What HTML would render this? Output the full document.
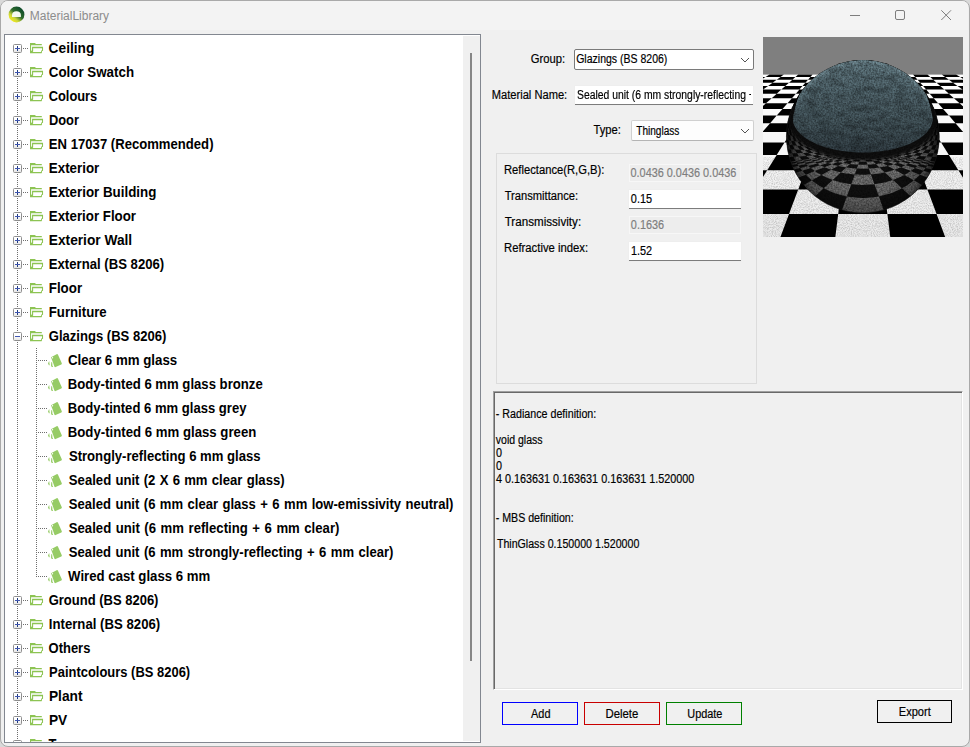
<!DOCTYPE html>
<html><head><meta charset="utf-8"><title>MaterialLibrary</title>
<style>
html,body{margin:0;padding:0}
body{width:970px;height:747px;overflow:hidden;position:relative;background:#d9d9d9;font-family:"Liberation Sans",sans-serif}
#win{position:absolute;left:0;top:0;width:968px;height:745px;border:1px solid #a9a9a9;border-radius:8px;background:#f0f0f0;overflow:hidden}
#tbar{position:absolute;left:0;top:0;width:968px;height:30px;background:#f3f3f3}
#pg{position:absolute;left:-1px;top:-1px;width:970px;height:747px}
.t{position:absolute;white-space:nowrap;font-size:12px;line-height:14px;transform-origin:0 11px;color:#000;-webkit-text-stroke:0.18px currentColor}
.b{position:absolute;white-space:nowrap;font-size:13px;line-height:15px;font-weight:bold;color:#000;transform-origin:0 12px}
.ic{position:absolute;display:block}
#tree{position:absolute;left:4px;top:34px;width:475px;height:707px;border:1px solid #828790;background:#fff;overflow:hidden}
#tin{position:absolute;left:-5px;top:-35px;width:470px;height:800px}
#sb{position:absolute;left:458px;top:1px;width:17px;height:705px;background:#f0f0f0}
#thumb{position:absolute;left:7px;top:17px;width:2px;height:608px;background:#868686}
.vd{position:absolute;width:1px;background:repeating-linear-gradient(to bottom,#6e6e6e 0,#6e6e6e 1px,transparent 1px,transparent 2px)}
.hd{position:absolute;height:1px;background:repeating-linear-gradient(to right,#6e6e6e 0,#6e6e6e 1px,transparent 1px,transparent 2px)}
.eb{position:absolute;left:13px;width:7px;height:7px;border:1px solid #8e8e8e;border-radius:1.5px;background:linear-gradient(#fff 40%,#e6e6e6)}
.eb .h{position:absolute;left:1px;top:3px;width:5px;height:1px;background:#4056b2;z-index:2}
.eb .v{position:absolute;left:3px;top:1px;width:1px;height:5px;background:#1f3a7c}
.combo{position:absolute;border:1px solid #7a7a7a;border-radius:2px;background:#fff}
.tb{position:absolute;background:#fff;border-bottom:1px solid #7c7c7c;box-shadow:0 0 0 0.5px #ececec;box-sizing:border-box}
.dis{position:absolute;width:110px;height:16px;border:1px solid #f7f7f7;background:#ededed}
.clip{position:absolute;overflow:hidden}
#gb{position:absolute;left:496px;top:153px;width:259px;height:229px;border:1px solid #dcdcdc}
#ta{position:absolute;left:493px;top:391px;width:468px;height:297px;border-style:solid;border-width:1px;border-color:#a0a0a0 #fff #fff #a0a0a0;background:#f0f0f0;box-shadow:inset 1px 1px 0 0 #696969,inset -1px -1px 0 0 #e3e3e3}
.btn{position:absolute;border:1px solid #000;background:#f0f0f0}
#img{position:absolute;left:763px;top:37px;display:block}
</style></head>
<body>
<div id="win"><div id="pg">
<div id="tbar"></div>
<svg class="ic" style="left:8.3px;top:6.4px" width="17" height="17" viewBox="0 0 17 17"><defs><linearGradient id="ig" x1="0.85" y1="0.15" x2="0.2" y2="0.9"><stop offset="0" stop-color="#0d4a2a"/><stop offset="0.45" stop-color="#2f6b2c"/><stop offset="0.75" stop-color="#c9d63a"/><stop offset="1" stop-color="#f3e81d"/></linearGradient></defs><circle cx="8.5" cy="8.5" r="7.9" fill="url(#ig)"/><path d="M4.0 11.1 L12.9 11.1 L12.9 9.0 Q12.6 5.4 8.4 5.3 Q4.3 5.4 4.0 9.0 Z" fill="#f6f9f0"/></svg>
<svg class="ic" style="left:845px;top:5px" width="115" height="20" viewBox="0 0 115 20"><g fill="none" stroke="#7d7d7d" stroke-width="1"><path d="M5 10.5H15"/><rect x="50.5" y="5.5" width="9" height="9" rx="1.5"/><path d="M96.3 5.3L106 15M106 5.3L96.3 15"/></g></svg>
<div id="tree">
<div id="tin">
<div class="vd" style="left:17px;top:48px;height:700px"></div>
<div class="vd" style="left:36px;top:348px;height:229px"></div>
<div class="hd" style="left:23px;top:48px;width:5px;background-position:0 0"></div>
<div class="eb" style="top:44px"><i class="h"></i><i class="v"></i></div>
<svg class="ic" style="left:30px;top:43px" width="15" height="12" viewBox="0 0 15 12"><path fill="#8dc453" d="M0 0h5l0.9 1.05h5.9v1.3H1.1v5.6l0.95-0.7V3.85h11v3.9l-1.1 0.6v1.2l-0.35 0.75H0z M3.15 5.2v3.2l-0.5 0.5h8.25l0.5-1.3 0.6-0.5V5.2z" fill-rule="evenodd"/></svg>
<span class="b" style="left:48px;top:41px;color:#000;transform:translateX(0.62px) scale(1.0547,1.07);">Ceiling</span>
<div class="hd" style="left:23px;top:72px;width:5px;background-position:0 0"></div>
<div class="eb" style="top:68px"><i class="h"></i><i class="v"></i></div>
<svg class="ic" style="left:30px;top:67px" width="15" height="12" viewBox="0 0 15 12"><path fill="#8dc453" d="M0 0h5l0.9 1.05h5.9v1.3H1.1v5.6l0.95-0.7V3.85h11v3.9l-1.1 0.6v1.2l-0.35 0.75H0z M3.15 5.2v3.2l-0.5 0.5h8.25l0.5-1.3 0.6-0.5V5.2z" fill-rule="evenodd"/></svg>
<span class="b" style="left:48px;top:65px;color:#000;transform:translateX(0.74px) scale(1.0275,1.07);">Color Swatch</span>
<div class="hd" style="left:23px;top:96px;width:5px;background-position:0 0"></div>
<div class="eb" style="top:92px"><i class="h"></i><i class="v"></i></div>
<svg class="ic" style="left:30px;top:91px" width="15" height="12" viewBox="0 0 15 12"><path fill="#8dc453" d="M0 0h5l0.9 1.05h5.9v1.3H1.1v5.6l0.95-0.7V3.85h11v3.9l-1.1 0.6v1.2l-0.35 0.75H0z M3.15 5.2v3.2l-0.5 0.5h8.25l0.5-1.3 0.6-0.5V5.2z" fill-rule="evenodd"/></svg>
<span class="b" style="left:48px;top:89px;color:#000;transform:translateX(0.69px) scale(0.9886,1.07);">Colours</span>
<div class="hd" style="left:23px;top:120px;width:5px;background-position:0 0"></div>
<div class="eb" style="top:116px"><i class="h"></i><i class="v"></i></div>
<svg class="ic" style="left:30px;top:115px" width="15" height="12" viewBox="0 0 15 12"><path fill="#8dc453" d="M0 0h5l0.9 1.05h5.9v1.3H1.1v5.6l0.95-0.7V3.85h11v3.9l-1.1 0.6v1.2l-0.35 0.75H0z M3.15 5.2v3.2l-0.5 0.5h8.25l0.5-1.3 0.6-0.5V5.2z" fill-rule="evenodd"/></svg>
<span class="b" style="left:48px;top:113px;color:#000;transform:translateX(0.92px) scale(0.9878,1.07);">Door</span>
<div class="hd" style="left:23px;top:144px;width:5px;background-position:0 0"></div>
<div class="eb" style="top:140px"><i class="h"></i><i class="v"></i></div>
<svg class="ic" style="left:30px;top:139px" width="15" height="12" viewBox="0 0 15 12"><path fill="#8dc453" d="M0 0h5l0.9 1.05h5.9v1.3H1.1v5.6l0.95-0.7V3.85h11v3.9l-1.1 0.6v1.2l-0.35 0.75H0z M3.15 5.2v3.2l-0.5 0.5h8.25l0.5-1.3 0.6-0.5V5.2z" fill-rule="evenodd"/></svg>
<span class="b" style="left:48px;top:137px;color:#000;transform:translateX(0.87px) scale(1.0082,1.07);">EN 17037 (Recommended)</span>
<div class="hd" style="left:23px;top:168px;width:5px;background-position:0 0"></div>
<div class="eb" style="top:164px"><i class="h"></i><i class="v"></i></div>
<svg class="ic" style="left:30px;top:163px" width="15" height="12" viewBox="0 0 15 12"><path fill="#8dc453" d="M0 0h5l0.9 1.05h5.9v1.3H1.1v5.6l0.95-0.7V3.85h11v3.9l-1.1 0.6v1.2l-0.35 0.75H0z M3.15 5.2v3.2l-0.5 0.5h8.25l0.5-1.3 0.6-0.5V5.2z" fill-rule="evenodd"/></svg>
<span class="b" style="left:48px;top:161px;color:#000;transform:translateX(0.79px) scale(1.0279,1.07);">Exterior</span>
<div class="hd" style="left:23px;top:192px;width:5px;background-position:0 0"></div>
<div class="eb" style="top:188px"><i class="h"></i><i class="v"></i></div>
<svg class="ic" style="left:30px;top:187px" width="15" height="12" viewBox="0 0 15 12"><path fill="#8dc453" d="M0 0h5l0.9 1.05h5.9v1.3H1.1v5.6l0.95-0.7V3.85h11v3.9l-1.1 0.6v1.2l-0.35 0.75H0z M3.15 5.2v3.2l-0.5 0.5h8.25l0.5-1.3 0.6-0.5V5.2z" fill-rule="evenodd"/></svg>
<span class="b" style="left:48px;top:185px;color:#000;transform:translateX(0.75px) scale(1.0277,1.07);">Exterior Building</span>
<div class="hd" style="left:23px;top:216px;width:5px;background-position:0 0"></div>
<div class="eb" style="top:212px"><i class="h"></i><i class="v"></i></div>
<svg class="ic" style="left:30px;top:211px" width="15" height="12" viewBox="0 0 15 12"><path fill="#8dc453" d="M0 0h5l0.9 1.05h5.9v1.3H1.1v5.6l0.95-0.7V3.85h11v3.9l-1.1 0.6v1.2l-0.35 0.75H0z M3.15 5.2v3.2l-0.5 0.5h8.25l0.5-1.3 0.6-0.5V5.2z" fill-rule="evenodd"/></svg>
<span class="b" style="left:48px;top:209px;color:#000;transform:translateX(0.79px) scale(1.0231,1.07);">Exterior Floor</span>
<div class="hd" style="left:23px;top:240px;width:5px;background-position:0 0"></div>
<div class="eb" style="top:236px"><i class="h"></i><i class="v"></i></div>
<svg class="ic" style="left:30px;top:235px" width="15" height="12" viewBox="0 0 15 12"><path fill="#8dc453" d="M0 0h5l0.9 1.05h5.9v1.3H1.1v5.6l0.95-0.7V3.85h11v3.9l-1.1 0.6v1.2l-0.35 0.75H0z M3.15 5.2v3.2l-0.5 0.5h8.25l0.5-1.3 0.6-0.5V5.2z" fill-rule="evenodd"/></svg>
<span class="b" style="left:48px;top:233px;color:#000;transform:translateX(0.78px) scale(1.0557,1.07);">Exterior Wall</span>
<div class="hd" style="left:23px;top:264px;width:5px;background-position:0 0"></div>
<div class="eb" style="top:260px"><i class="h"></i><i class="v"></i></div>
<svg class="ic" style="left:30px;top:259px" width="15" height="12" viewBox="0 0 15 12"><path fill="#8dc453" d="M0 0h5l0.9 1.05h5.9v1.3H1.1v5.6l0.95-0.7V3.85h11v3.9l-1.1 0.6v1.2l-0.35 0.75H0z M3.15 5.2v3.2l-0.5 0.5h8.25l0.5-1.3 0.6-0.5V5.2z" fill-rule="evenodd"/></svg>
<span class="b" style="left:48px;top:257px;color:#000;transform:translateX(0.79px) scale(1.0110,1.07);">External (BS 8206)</span>
<div class="hd" style="left:23px;top:288px;width:5px;background-position:0 0"></div>
<div class="eb" style="top:284px"><i class="h"></i><i class="v"></i></div>
<svg class="ic" style="left:30px;top:283px" width="15" height="12" viewBox="0 0 15 12"><path fill="#8dc453" d="M0 0h5l0.9 1.05h5.9v1.3H1.1v5.6l0.95-0.7V3.85h11v3.9l-1.1 0.6v1.2l-0.35 0.75H0z M3.15 5.2v3.2l-0.5 0.5h8.25l0.5-1.3 0.6-0.5V5.2z" fill-rule="evenodd"/></svg>
<span class="b" style="left:48px;top:281px;color:#000;transform:translateX(0.79px) scale(1.0241,1.07);">Floor</span>
<div class="hd" style="left:23px;top:312px;width:5px;background-position:0 0"></div>
<div class="eb" style="top:308px"><i class="h"></i><i class="v"></i></div>
<svg class="ic" style="left:30px;top:307px" width="15" height="12" viewBox="0 0 15 12"><path fill="#8dc453" d="M0 0h5l0.9 1.05h5.9v1.3H1.1v5.6l0.95-0.7V3.85h11v3.9l-1.1 0.6v1.2l-0.35 0.75H0z M3.15 5.2v3.2l-0.5 0.5h8.25l0.5-1.3 0.6-0.5V5.2z" fill-rule="evenodd"/></svg>
<span class="b" style="left:48px;top:305px;color:#000;transform:translateX(0.77px) scale(1.0157,1.07);">Furniture</span>
<div class="hd" style="left:23px;top:336px;width:5px;background-position:0 0"></div>
<div class="eb" style="top:332px"><i class="h"></i></div>
<svg class="ic" style="left:30px;top:331px" width="15" height="12" viewBox="0 0 15 12"><path fill="#8dc453" d="M0 0h5l0.9 1.05h5.9v1.3H1.1v5.6l0.95-0.7V3.85h11v3.9l-1.1 0.6v1.2l-0.35 0.75H0z M3.15 5.2v3.2l-0.5 0.5h8.25l0.5-1.3 0.6-0.5V5.2z" fill-rule="evenodd"/></svg>
<span class="b" style="left:48px;top:329px;color:#000;transform:translateX(0.73px) scale(1.0051,1.07);">Glazings (BS 8206)</span>
<div class="hd" style="left:38px;top:360px;width:9px"></div>
<svg class="ic" style="left:47px;top:353px" width="16" height="15" viewBox="0 0 16 15"><path d="M4.0 4.2 L9.6 1.2 Q10.6 0.8 11.0 1.8 L14.8 10.2 Q15.1 11.0 14.3 11.5 L8.6 14.1 Q7.7 14.4 7.4 13.6 L5.6 8.6 Z" fill="#96cb65"/><circle cx="5.5" cy="4.7" r="0.7" fill="#fff"/><path d="M2.2 7.9 L2.7 12.3 L1.9 12.3 L1.0 10.6 Z M4.3 9.0 L5.2 9.6 L5.4 12.4 L6.1 13.9 L4.7 14.0 L4.0 12.5 Z" fill="#96cb65"/></svg>
<span class="b" style="left:67px;top:353px;color:#000;transform:translateX(0.91px) scale(1.0221,1.07);">Clear 6 mm glass</span>
<div class="hd" style="left:38px;top:384px;width:9px"></div>
<svg class="ic" style="left:47px;top:377px" width="16" height="15" viewBox="0 0 16 15"><path d="M4.0 4.2 L9.6 1.2 Q10.6 0.8 11.0 1.8 L14.8 10.2 Q15.1 11.0 14.3 11.5 L8.6 14.1 Q7.7 14.4 7.4 13.6 L5.6 8.6 Z" fill="#96cb65"/><circle cx="5.5" cy="4.7" r="0.7" fill="#fff"/><path d="M2.2 7.9 L2.7 12.3 L1.9 12.3 L1.0 10.6 Z M4.3 9.0 L5.2 9.6 L5.4 12.4 L6.1 13.9 L4.7 14.0 L4.0 12.5 Z" fill="#96cb65"/></svg>
<span class="b" style="left:67px;top:377px;color:#000;transform:translateX(0.72px) scale(1.0110,1.07);">Body-tinted 6 mm glass bronze</span>
<div class="hd" style="left:38px;top:408px;width:9px"></div>
<svg class="ic" style="left:47px;top:401px" width="16" height="15" viewBox="0 0 16 15"><path d="M4.0 4.2 L9.6 1.2 Q10.6 0.8 11.0 1.8 L14.8 10.2 Q15.1 11.0 14.3 11.5 L8.6 14.1 Q7.7 14.4 7.4 13.6 L5.6 8.6 Z" fill="#96cb65"/><circle cx="5.5" cy="4.7" r="0.7" fill="#fff"/><path d="M2.2 7.9 L2.7 12.3 L1.9 12.3 L1.0 10.6 Z M4.3 9.0 L5.2 9.6 L5.4 12.4 L6.1 13.9 L4.7 14.0 L4.0 12.5 Z" fill="#96cb65"/></svg>
<span class="b" style="left:67px;top:401px;color:#000;transform:translateX(0.77px) scale(1.0055,1.07);">Body-tinted 6 mm glass grey</span>
<div class="hd" style="left:38px;top:432px;width:9px"></div>
<svg class="ic" style="left:47px;top:425px" width="16" height="15" viewBox="0 0 16 15"><path d="M4.0 4.2 L9.6 1.2 Q10.6 0.8 11.0 1.8 L14.8 10.2 Q15.1 11.0 14.3 11.5 L8.6 14.1 Q7.7 14.4 7.4 13.6 L5.6 8.6 Z" fill="#96cb65"/><circle cx="5.5" cy="4.7" r="0.7" fill="#fff"/><path d="M2.2 7.9 L2.7 12.3 L1.9 12.3 L1.0 10.6 Z M4.3 9.0 L5.2 9.6 L5.4 12.4 L6.1 13.9 L4.7 14.0 L4.0 12.5 Z" fill="#96cb65"/></svg>
<span class="b" style="left:67px;top:425px;color:#000;transform:translateX(0.74px) scale(1.0156,1.07);">Body-tinted 6 mm glass green</span>
<div class="hd" style="left:38px;top:456px;width:9px"></div>
<svg class="ic" style="left:47px;top:449px" width="16" height="15" viewBox="0 0 16 15"><path d="M4.0 4.2 L9.6 1.2 Q10.6 0.8 11.0 1.8 L14.8 10.2 Q15.1 11.0 14.3 11.5 L8.6 14.1 Q7.7 14.4 7.4 13.6 L5.6 8.6 Z" fill="#96cb65"/><circle cx="5.5" cy="4.7" r="0.7" fill="#fff"/><path d="M2.2 7.9 L2.7 12.3 L1.9 12.3 L1.0 10.6 Z M4.3 9.0 L5.2 9.6 L5.4 12.4 L6.1 13.9 L4.7 14.0 L4.0 12.5 Z" fill="#96cb65"/></svg>
<span class="b" style="left:68px;top:449px;color:#000;transform:translateX(0.88px) scale(1.0093,1.07);">Strongly-reflecting 6 mm glass</span>
<div class="hd" style="left:38px;top:480px;width:9px"></div>
<svg class="ic" style="left:47px;top:473px" width="16" height="15" viewBox="0 0 16 15"><path d="M4.0 4.2 L9.6 1.2 Q10.6 0.8 11.0 1.8 L14.8 10.2 Q15.1 11.0 14.3 11.5 L8.6 14.1 Q7.7 14.4 7.4 13.6 L5.6 8.6 Z" fill="#96cb65"/><circle cx="5.5" cy="4.7" r="0.7" fill="#fff"/><path d="M2.2 7.9 L2.7 12.3 L1.9 12.3 L1.0 10.6 Z M4.3 9.0 L5.2 9.6 L5.4 12.4 L6.1 13.9 L4.7 14.0 L4.0 12.5 Z" fill="#96cb65"/></svg>
<span class="b" style="left:68px;top:473px;color:#000;word-spacing:0.6px;transform:translateX(0.82px) scale(1.0098,1.07);">Sealed unit (2 X 6 mm clear glass)</span>
<div class="hd" style="left:38px;top:504px;width:9px"></div>
<svg class="ic" style="left:47px;top:497px" width="16" height="15" viewBox="0 0 16 15"><path d="M4.0 4.2 L9.6 1.2 Q10.6 0.8 11.0 1.8 L14.8 10.2 Q15.1 11.0 14.3 11.5 L8.6 14.1 Q7.7 14.4 7.4 13.6 L5.6 8.6 Z" fill="#96cb65"/><circle cx="5.5" cy="4.7" r="0.7" fill="#fff"/><path d="M2.2 7.9 L2.7 12.3 L1.9 12.3 L1.0 10.6 Z M4.3 9.0 L5.2 9.6 L5.4 12.4 L6.1 13.9 L4.7 14.0 L4.0 12.5 Z" fill="#96cb65"/></svg>
<span class="b" style="left:68px;top:497px;color:#000;word-spacing:0.8px;transform:translateX(0.84px) scale(1.0051,1.07);">Sealed unit (6 mm clear glass + 6 mm low-emissivity neutral)</span>
<div class="hd" style="left:38px;top:528px;width:9px"></div>
<svg class="ic" style="left:47px;top:521px" width="16" height="15" viewBox="0 0 16 15"><path d="M4.0 4.2 L9.6 1.2 Q10.6 0.8 11.0 1.8 L14.8 10.2 Q15.1 11.0 14.3 11.5 L8.6 14.1 Q7.7 14.4 7.4 13.6 L5.6 8.6 Z" fill="#96cb65"/><circle cx="5.5" cy="4.7" r="0.7" fill="#fff"/><path d="M2.2 7.9 L2.7 12.3 L1.9 12.3 L1.0 10.6 Z M4.3 9.0 L5.2 9.6 L5.4 12.4 L6.1 13.9 L4.7 14.0 L4.0 12.5 Z" fill="#96cb65"/></svg>
<span class="b" style="left:68px;top:521px;color:#000;word-spacing:0.9px;transform:translateX(0.79px) scale(1.0110,1.07);">Sealed unit (6 mm reflecting + 6 mm clear)</span>
<div class="hd" style="left:38px;top:552px;width:9px"></div>
<svg class="ic" style="left:47px;top:545px" width="16" height="15" viewBox="0 0 16 15"><path d="M4.0 4.2 L9.6 1.2 Q10.6 0.8 11.0 1.8 L14.8 10.2 Q15.1 11.0 14.3 11.5 L8.6 14.1 Q7.7 14.4 7.4 13.6 L5.6 8.6 Z" fill="#96cb65"/><circle cx="5.5" cy="4.7" r="0.7" fill="#fff"/><path d="M2.2 7.9 L2.7 12.3 L1.9 12.3 L1.0 10.6 Z M4.3 9.0 L5.2 9.6 L5.4 12.4 L6.1 13.9 L4.7 14.0 L4.0 12.5 Z" fill="#96cb65"/></svg>
<span class="b" style="left:68px;top:545px;color:#000;word-spacing:0.8px;transform:translateX(0.85px) scale(1.0067,1.07);">Sealed unit (6 mm strongly-reflecting + 6 mm clear)</span>
<div class="hd" style="left:38px;top:576px;width:9px"></div>
<svg class="ic" style="left:47px;top:569px" width="16" height="15" viewBox="0 0 16 15"><path d="M4.0 4.2 L9.6 1.2 Q10.6 0.8 11.0 1.8 L14.8 10.2 Q15.1 11.0 14.3 11.5 L8.6 14.1 Q7.7 14.4 7.4 13.6 L5.6 8.6 Z" fill="#96cb65"/><circle cx="5.5" cy="4.7" r="0.7" fill="#fff"/><path d="M2.2 7.9 L2.7 12.3 L1.9 12.3 L1.0 10.6 Z M4.3 9.0 L5.2 9.6 L5.4 12.4 L6.1 13.9 L4.7 14.0 L4.0 12.5 Z" fill="#96cb65"/></svg>
<span class="b" style="left:68px;top:569px;color:#000;transform:translateX(0.07px) scale(1.0153,1.07);">Wired cast glass 6 mm</span>
<div class="hd" style="left:23px;top:600px;width:5px;background-position:0 0"></div>
<div class="eb" style="top:596px"><i class="h"></i><i class="v"></i></div>
<svg class="ic" style="left:30px;top:595px" width="15" height="12" viewBox="0 0 15 12"><path fill="#8dc453" d="M0 0h5l0.9 1.05h5.9v1.3H1.1v5.6l0.95-0.7V3.85h11v3.9l-1.1 0.6v1.2l-0.35 0.75H0z M3.15 5.2v3.2l-0.5 0.5h8.25l0.5-1.3 0.6-0.5V5.2z" fill-rule="evenodd"/></svg>
<span class="b" style="left:48px;top:593px;color:#000;transform:translateX(0.65px) scale(0.9999,1.07);">Ground (BS 8206)</span>
<div class="hd" style="left:23px;top:624px;width:5px;background-position:0 0"></div>
<div class="eb" style="top:620px"><i class="h"></i><i class="v"></i></div>
<svg class="ic" style="left:30px;top:619px" width="15" height="12" viewBox="0 0 15 12"><path fill="#8dc453" d="M0 0h5l0.9 1.05h5.9v1.3H1.1v5.6l0.95-0.7V3.85h11v3.9l-1.1 0.6v1.2l-0.35 0.75H0z M3.15 5.2v3.2l-0.5 0.5h8.25l0.5-1.3 0.6-0.5V5.2z" fill-rule="evenodd"/></svg>
<span class="b" style="left:48px;top:617px;color:#000;transform:translateX(0.80px) scale(1.0143,1.07);">Internal (BS 8206)</span>
<div class="hd" style="left:23px;top:648px;width:5px;background-position:0 0"></div>
<div class="eb" style="top:644px"><i class="h"></i><i class="v"></i></div>
<svg class="ic" style="left:30px;top:643px" width="15" height="12" viewBox="0 0 15 12"><path fill="#8dc453" d="M0 0h5l0.9 1.05h5.9v1.3H1.1v5.6l0.95-0.7V3.85h11v3.9l-1.1 0.6v1.2l-0.35 0.75H0z M3.15 5.2v3.2l-0.5 0.5h8.25l0.5-1.3 0.6-0.5V5.2z" fill-rule="evenodd"/></svg>
<span class="b" style="left:48px;top:641px;color:#000;transform:translateX(0.60px) scale(0.9970,1.07);">Others</span>
<div class="hd" style="left:23px;top:672px;width:5px;background-position:0 0"></div>
<div class="eb" style="top:668px"><i class="h"></i><i class="v"></i></div>
<svg class="ic" style="left:30px;top:667px" width="15" height="12" viewBox="0 0 15 12"><path fill="#8dc453" d="M0 0h5l0.9 1.05h5.9v1.3H1.1v5.6l0.95-0.7V3.85h11v3.9l-1.1 0.6v1.2l-0.35 0.75H0z M3.15 5.2v3.2l-0.5 0.5h8.25l0.5-1.3 0.6-0.5V5.2z" fill-rule="evenodd"/></svg>
<span class="b" style="left:49px;top:665px;color:#000;transform:translateX(0.07px) scale(0.9964,1.07);">Paintcolours (BS 8206)</span>
<div class="hd" style="left:23px;top:696px;width:5px;background-position:0 0"></div>
<div class="eb" style="top:692px"><i class="h"></i><i class="v"></i></div>
<svg class="ic" style="left:30px;top:691px" width="15" height="12" viewBox="0 0 15 12"><path fill="#8dc453" d="M0 0h5l0.9 1.05h5.9v1.3H1.1v5.6l0.95-0.7V3.85h11v3.9l-1.1 0.6v1.2l-0.35 0.75H0z M3.15 5.2v3.2l-0.5 0.5h8.25l0.5-1.3 0.6-0.5V5.2z" fill-rule="evenodd"/></svg>
<span class="b" style="left:48px;top:689px;color:#000;transform:translateX(0.89px) scale(1.0574,1.07);">Plant</span>
<div class="hd" style="left:23px;top:720px;width:5px;background-position:0 0"></div>
<div class="eb" style="top:716px"><i class="h"></i><i class="v"></i></div>
<svg class="ic" style="left:30px;top:715px" width="15" height="12" viewBox="0 0 15 12"><path fill="#8dc453" d="M0 0h5l0.9 1.05h5.9v1.3H1.1v5.6l0.95-0.7V3.85h11v3.9l-1.1 0.6v1.2l-0.35 0.75H0z M3.15 5.2v3.2l-0.5 0.5h8.25l0.5-1.3 0.6-0.5V5.2z" fill-rule="evenodd"/></svg>
<span class="b" style="left:48px;top:713px;color:#000;transform:translateX(0.95px) scale(1.0555,1.07);">PV</span>
<div class="hd" style="left:23px;top:744px;width:5px;background-position:0 0"></div>
<div class="eb" style="top:740px"><i class="h"></i><i class="v"></i></div>
<svg class="ic" style="left:30px;top:739px" width="15" height="12" viewBox="0 0 15 12"><path fill="#8dc453" d="M0 0h5l0.9 1.05h5.9v1.3H1.1v5.6l0.95-0.7V3.85h11v3.9l-1.1 0.6v1.2l-0.35 0.75H0z M3.15 5.2v3.2l-0.5 0.5h8.25l0.5-1.3 0.6-0.5V5.2z" fill-rule="evenodd"/></svg>
<span class="b" style="left:48px;top:737px;color:#000;transform:translateX(0.60px) scale(0.9953,1.07);">T</span>
</div>
<div id="sb"><div id="thumb"></div></div>
</div>
<span class="t" style="left:530px;top:52px;color:#000;transform:translateX(0.79px) scale(0.9360,1.0);">Group:</span>
<span class="t" style="left:491px;top:88px;color:#000;transform:translateX(0.75px) scale(0.9275,1.0);">Material Name:</span>
<span class="t" style="left:593px;top:123px;color:#000;transform:translateX(0.47px) scale(0.9326,1.0);">Type:</span>
<div class="combo" style="left:574px;top:49px;width:178px;height:19px;border-color:#7a7a7a"></div>
<svg class="ic" style="left:739px;top:56px" width="12" height="8" viewBox="0 0 12 8"><path d="M2 2 L6 6 L10 2" fill="none" stroke="#4a4a4a" stroke-width="0.95"/></svg>
<span class="t" style="left:576px;top:52px;color:#000;transform:translateX(0.18px) scale(0.8763,1.0);">Glazings (BS 8206)</span>
<div class="tb" style="left:575px;top:86px;width:178px;height:19px"></div>
<div class="clip" style="left:575px;top:86px;width:176px;height:18px">
<span class="t" style="left:2px;top:2px;transform:scaleX(0.8644)">Sealed unit (6 mm strongly-reflecting + 6 mm clear)</span>
</div>
<div class="combo" style="left:631px;top:120px;width:121px;height:19px;border-color:#d0d0d0;border-bottom-color:#b4b4b4;background:#fdfdfd"></div>
<svg class="ic" style="left:739px;top:127px" width="12" height="8" viewBox="0 0 12 8"><path d="M2 2 L6 6 L10 2" fill="none" stroke="#4a4a4a" stroke-width="0.95"/></svg>
<span class="t" style="left:636px;top:124px;color:#000;transform:translateX(0.26px) scale(0.8397,1.0);">Thinglass</span>
<div id="gb"></div>
<span class="t" style="left:504px;top:163px;color:#000;transform:translateX(0.02px) scale(0.9343,1.0);">Reflectance(R,G,B):</span>
<div class="dis" style="left:629px;top:164px"></div>
<span class="t" style="left:630px;top:166px;color:#7e7e7e;transform:translateX(0.53px) scale(0.9060,1.0);">0.0436 0.0436 0.0436</span>
<span class="t" style="left:504px;top:189px;color:#000;transform:translateX(0.63px) scale(0.9320,1.0);">Transmittance:</span>
<div class="tb" style="left:629px;top:190px;width:112px;height:19px"></div>
<span class="t" style="left:630px;top:192px;color:#000;transform:translateX(0.86px) scale(0.9060,1.0);">0.15</span>
<span class="t" style="left:504px;top:215px;color:#000;transform:translateX(0.67px) scale(0.9689,1.0);">Transmissivity:</span>
<div class="dis" style="left:629px;top:216px"></div>
<span class="t" style="left:630px;top:218px;color:#7e7e7e;transform:translateX(0.87px) scale(0.9060,1.0);">0.1636</span>
<span class="t" style="left:504px;top:241px;color:#000;transform:translateX(0.03px) scale(0.9403,1.0);">Refractive index:</span>
<div class="tb" style="left:629px;top:242px;width:112px;height:19px"></div>
<span class="t" style="left:630px;top:244px;color:#000;transform:translateX(0.94px) scale(0.9060,1.0);">1.52</span>
<div id="ta"></div>
<span class="t" style="left:495px;top:407px;color:#000;transform:translateX(0.71px) scale(0.8920,1.0);">- Radiance definition:</span>
<span class="t" style="left:495px;top:433px;color:#000;transform:translateX(0.76px) scale(0.8773,1.0);">void glass</span>
<span class="t" style="left:495px;top:446px;color:#000;transform:translateX(0.89px) scale(0.9000,1.0);">0</span>
<span class="t" style="left:495px;top:459px;color:#000;transform:translateX(0.89px) scale(0.9000,1.0);">0</span>
<span class="t" style="left:495px;top:472px;color:#000;transform:translateX(0.90px) scale(0.9011,1.0);">4 0.163631 0.163631 0.163631 1.520000</span>
<span class="t" style="left:495px;top:511px;color:#000;transform:translateX(0.69px) scale(0.8864,1.0);">- MBS definition:</span>
<span class="t" style="left:496px;top:537px;color:#000;transform:translateX(0.89px) scale(0.8857,1.0);">ThinGlass 0.150000 1.520000</span>
<div class="btn" style="left:502px;top:702px;width:74px;height:21px;border-color:#0000ff"></div>
<span class="t" style="left:531px;top:707px;color:#000;transform:translateX(0.10px) scale(0.9087,1.0);">Add</span>
<div class="btn" style="left:584px;top:702px;width:74px;height:21px;border-color:#c80000"></div>
<span class="t" style="left:605px;top:707px;color:#000;transform:translateX(0.43px) scale(0.9485,1.0);">Delete</span>
<div class="btn" style="left:666px;top:702px;width:74px;height:21px;border-color:#008000"></div>
<span class="t" style="left:687px;top:707px;color:#000;transform:translateX(0.28px) scale(0.9080,1.0);">Update</span>
<div class="btn" style="left:877px;top:700px;width:73px;height:21px;border-color:#000"></div>
<span class="t" style="left:898px;top:705px;color:#000;transform:translateX(0.79px) scale(0.9205,1.0);">Export</span>
<span class="t" style="left:29px;top:9px;color:#8c8c8c;transform:translateX(0.80px) scale(0.9982,1.0);-webkit-text-stroke:0;">MaterialLibrary</span>
<svg id="img" width="200" height="200" viewBox="0 0 200 200">
<defs>
<clipPath id="cs"><circle cx="99.85" cy="99.50" r="76.4"/></clipPath>
<filter id="bl" x="-5%" y="-5%" width="110%" height="110%"><feGaussianBlur stdDeviation="0.75"/></filter>
<filter id="bl2"><feGaussianBlur stdDeviation="0.7"/></filter>
<filter id="bl3" x="-10%" y="-10%" width="120%" height="120%"><feGaussianBlur stdDeviation="1.6"/></filter>
<filter id="nz" x="0" y="0" width="100%" height="100%"><feTurbulence type="fractalNoise" baseFrequency="0.6" numOctaves="2" seed="3" result="n"/><feColorMatrix type="matrix" values="0 0 0 0 0  0 0 0 0 0  0 0 0 0 0  1.6 0 0 0 -0.45"/></filter>
<filter id="nzl" x="0" y="0" width="100%" height="100%"><feTurbulence type="fractalNoise" baseFrequency="0.09 0.16" numOctaves="2" seed="5"/><feColorMatrix type="matrix" values="0 0 0 0 0  0 0 0 0 0  0 0 0 0 0  2.4 0 0 0 -0.95"/></filter>
<filter id="nzw" x="0" y="0" width="100%" height="100%"><feTurbulence type="fractalNoise" baseFrequency="0.95" numOctaves="2" seed="8"/><feColorMatrix type="matrix" values="0 0 0 0 0  0 0 0 0 0  0 0 0 0 0  1.4 0 0 0 -0.5"/></filter>
<linearGradient id="wg" x1="0" y1="0" x2="0" y2="1"><stop offset="0" stop-color="#ffffff"/><stop offset="0.45" stop-color="#f6f6f6"/><stop offset="1" stop-color="#e9e9e9"/></linearGradient>
<radialGradient id="cap" cx="99.9" cy="62" r="95" gradientUnits="userSpaceOnUse"><stop offset="0" stop-color="#627b85"/><stop offset="0.5" stop-color="#52676f"/><stop offset="0.85" stop-color="#3f5058"/><stop offset="1" stop-color="#2f3b41"/></radialGradient>
<radialGradient id="sh" cx="99.9" cy="109.5" r="76.4" gradientUnits="userSpaceOnUse"><stop offset="0" stop-color="#000" stop-opacity="0"/><stop offset="0.6" stop-color="#000" stop-opacity="0.02"/><stop offset="0.85" stop-color="#000" stop-opacity="0.3"/><stop offset="1" stop-color="#000" stop-opacity="0.8"/></radialGradient>
<clipPath id="capc"><path d="M99.9 23.1L87.7 24.1L82.7 25.0L78.9 26.0L75.8 27.0L73.0 28.0L70.6 28.9L68.3 29.9L66.2 30.9L64.3 31.9L62.5 32.8L60.8 33.8L59.3 34.8L57.7 35.8L56.3 36.7L54.9 37.7L53.6 38.7L52.4 39.6L51.2 40.6L50.0 41.6L48.9 42.6L47.8 43.5L46.8 44.5L45.8 45.5L44.9 46.5L43.9 47.4L43.1 48.4L42.2 49.4L41.4 50.4L40.7 51.3L40.0 52.3L39.3 53.3L38.7 54.2L38.1 55.2L37.5 56.2L37.0 57.2L36.5 58.1L36.1 59.1L35.7 60.1L35.3 61.1L34.9 62.0L34.5 63.0L34.2 64.0L33.9 65.0L33.6 65.9L33.3 66.9L33.0 67.9L32.8 68.8L32.5 69.8L32.3 70.8L32.0 71.8L31.8 72.7L31.6 73.7L31.4 74.7L31.2 75.7L31.0 76.6L30.7 77.6L30.5 78.6L30.3 79.6L30.1 80.5L29.9 81.5L30.1 84.2L30.7 86.8L31.8 89.4L33.3 92.0L35.2 94.5L37.5 96.9L40.2 99.3L43.2 101.5L46.6 103.6L50.4 105.5L54.4 107.4L58.7 109.0L63.3 110.5L68.1 111.8L73.1 112.9L78.2 113.8L83.5 114.6L88.9 115.1L94.4 115.4L99.9 115.5L105.3 115.4L110.8 115.1L116.2 114.6L121.5 113.8L126.6 112.9L131.6 111.8L136.4 110.5L141.0 109.0L145.3 107.4L149.3 105.5L153.1 103.6L156.5 101.5L159.5 99.3L162.2 96.9L164.5 94.5L166.4 92.0L167.9 89.4L169.0 86.8L169.6 84.2L169.9 81.5L169.6 80.5L169.4 79.6L169.2 78.6L169.0 77.6L168.7 76.6L168.5 75.7L168.3 74.7L168.1 73.7L167.9 72.7L167.7 71.8L167.4 70.8L167.2 69.8L166.9 68.8L166.7 67.9L166.4 66.9L166.1 65.9L165.8 65.0L165.5 64.0L165.2 63.0L164.8 62.0L164.4 61.1L164.0 60.1L163.6 59.1L163.2 58.1L162.7 57.2L162.2 56.2L161.6 55.2L161.0 54.2L160.4 53.3L159.7 52.3L159.0 51.3L158.3 50.4L157.5 49.4L156.6 48.4L155.8 47.4L154.8 46.5L153.9 45.5L152.9 44.5L151.9 43.5L150.8 42.6L149.7 41.6L148.5 40.6L147.3 39.6L146.1 38.7L144.8 37.7L143.4 36.7L142.0 35.8L140.4 34.8L138.9 33.8L137.2 32.8L135.4 31.9L133.5 30.9L131.4 29.9L129.1 28.9L126.7 28.0L123.9 27.0L120.8 26.0L117.0 25.0L112.0 24.1L99.9 23.1Z"/></clipPath>
<linearGradient id="capl" x1="0" y1="23.1" x2="0" y2="115.5" gradientUnits="userSpaceOnUse"><stop offset="0" stop-color="#6c868f"/><stop offset="0.3" stop-color="#586e76"/><stop offset="0.7" stop-color="#475960"/><stop offset="1" stop-color="#36434a"/></linearGradient>
<clipPath id="botc"><rect x="0" y="70" width="200" height="130"/></clipPath>
<clipPath id="topc"><rect x="0" y="0" width="200" height="78"/></clipPath>
</defs>
<rect width="200" height="200" fill="#7f7f7f"/>
<g filter="url(#bl)"><rect x="-5" y="37.5" width="210" height="170" fill="url(#wg)"/>
<path d="M6.5 37.5L20.9 37.5L17.5 40.0L2.5 40.0ZM35.2 37.5L49.6 37.5L47.4 40.0L32.4 40.0ZM63.9 37.5L78.3 37.5L77.3 40.0L62.4 40.0ZM92.6 37.5L107.0 37.5L107.3 40.0L92.3 40.0ZM121.3 37.5L135.7 37.5L137.2 40.0L122.3 40.0ZM150.0 37.5L164.4 37.5L167.2 40.0L152.2 40.0ZM178.7 37.5L193.1 37.5L197.1 40.0L182.1 40.0ZM-12.5 40.0L2.5 40.0L-1.9 42.7L-17.6 42.7ZM17.5 40.0L32.4 40.0L29.4 42.7L13.7 42.7ZM47.4 40.0L62.4 40.0L60.7 42.7L45.0 42.7ZM77.3 40.0L92.3 40.0L92.0 42.7L76.3 42.7ZM107.3 40.0L122.3 40.0L123.3 42.7L107.6 42.7ZM137.2 40.0L152.2 40.0L154.6 42.7L138.9 42.7ZM167.2 40.0L182.1 40.0L185.9 42.7L170.2 42.7ZM197.1 40.0L212.1 40.0L217.2 42.7L201.5 42.7ZM-1.9 42.7L13.7 42.7L9.6 45.7L-6.8 45.7ZM29.4 42.7L45.0 42.7L42.4 45.7L26.0 45.7ZM60.7 42.7L76.3 42.7L75.2 45.7L58.8 45.7ZM92.0 42.7L107.6 42.7L108.0 45.7L91.6 45.7ZM123.3 42.7L138.9 42.7L140.8 45.7L124.4 45.7ZM154.6 42.7L170.2 42.7L173.6 45.7L157.2 45.7ZM185.9 42.7L201.5 42.7L206.4 45.7L190.0 45.7ZM9.6 45.7L26.0 45.7L22.3 49.0L5.1 49.0ZM42.4 45.7L58.8 45.7L56.8 49.0L39.5 49.0ZM75.2 45.7L91.6 45.7L91.2 49.0L74.0 49.0ZM108.0 45.7L124.4 45.7L125.6 49.0L108.4 49.0ZM140.8 45.7L157.2 45.7L160.1 49.0L142.8 49.0ZM173.6 45.7L190.0 45.7L194.5 49.0L177.3 49.0ZM-12.1 49.0L5.1 49.0L0.1 52.6L-18.0 52.6ZM22.3 49.0L39.5 49.0L36.4 52.6L18.3 52.6ZM56.8 49.0L74.0 49.0L72.6 52.6L54.5 52.6ZM91.2 49.0L108.4 49.0L108.9 52.6L90.7 52.6ZM125.6 49.0L142.8 49.0L145.1 52.6L127.0 52.6ZM160.1 49.0L177.3 49.0L181.3 52.6L163.2 52.6ZM194.5 49.0L211.7 49.0L217.6 52.6L199.5 52.6ZM0.1 52.6L18.3 52.6L13.7 56.7L-5.4 56.7ZM36.4 52.6L54.5 52.6L52.0 56.7L32.9 56.7ZM72.6 52.6L90.7 52.6L90.2 56.7L71.1 56.7ZM108.9 52.6L127.0 52.6L128.5 56.7L109.4 56.7ZM145.1 52.6L163.2 52.6L166.7 56.7L147.6 56.7ZM181.3 52.6L199.5 52.6L205.0 56.7L185.9 56.7ZM13.7 56.7L32.9 56.7L28.9 61.2L8.7 61.2ZM52.0 56.7L71.1 56.7L69.4 61.2L49.2 61.2ZM90.2 56.7L109.4 56.7L109.9 61.2L89.7 61.2ZM128.5 56.7L147.6 56.7L150.4 61.2L130.2 61.2ZM166.7 56.7L185.9 56.7L190.9 61.2L170.7 61.2ZM-11.6 61.2L8.7 61.2L3.0 66.2L-18.6 66.2ZM28.9 61.2L49.2 61.2L46.0 66.2L24.5 66.2ZM69.4 61.2L89.7 61.2L89.0 66.2L67.5 66.2ZM109.9 61.2L130.2 61.2L132.1 66.2L110.6 66.2ZM150.4 61.2L170.7 61.2L175.1 66.2L153.6 66.2ZM190.9 61.2L211.2 61.2L218.2 66.2L196.6 66.2ZM3.0 66.2L24.5 66.2L19.5 72.0L-3.5 72.0ZM46.0 66.2L67.5 66.2L65.4 72.0L42.4 72.0ZM89.0 66.2L110.6 66.2L111.3 72.0L88.3 72.0ZM132.1 66.2L153.6 66.2L157.2 72.0L134.2 72.0ZM175.1 66.2L196.6 66.2L203.1 72.0L180.1 72.0ZM19.5 72.0L42.4 72.0L38.3 78.6L13.7 78.6ZM65.4 72.0L88.3 72.0L87.5 78.6L62.9 78.6ZM111.3 72.0L134.2 72.0L136.7 78.6L112.1 78.6ZM157.2 72.0L180.1 72.0L185.9 78.6L161.3 78.6ZM-10.9 78.6L13.7 78.6L7.1 86.2L-19.4 86.2ZM38.3 78.6L62.9 78.6L60.1 86.2L33.6 86.2ZM87.5 78.6L112.1 78.6L113.0 86.2L86.6 86.2ZM136.7 78.6L161.3 78.6L166.0 86.2L139.5 86.2ZM185.9 78.6L210.5 78.6L219.0 86.2L192.5 86.2ZM7.1 86.2L33.6 86.2L28.1 95.0L-0.6 95.0ZM60.1 86.2L86.6 86.2L85.5 95.0L56.8 95.0ZM113.0 86.2L139.5 86.2L142.8 95.0L114.1 95.0ZM166.0 86.2L192.5 86.2L200.2 95.0L171.5 95.0ZM-29.3 95.0L-0.6 95.0L-9.8 105.5L-41.1 105.5ZM28.1 95.0L56.8 95.0L52.8 105.5L21.5 105.5ZM85.5 95.0L114.1 95.0L115.5 105.5L84.1 105.5ZM142.8 95.0L171.5 95.0L178.1 105.5L146.8 105.5ZM200.2 95.0L228.9 95.0L240.7 105.5L209.4 105.5ZM-9.8 105.5L21.5 105.5L13.7 118.0L-20.7 118.0ZM52.8 105.5L84.1 105.5L82.6 118.0L48.2 118.0ZM115.5 105.5L146.8 105.5L151.4 118.0L117.0 118.0ZM178.1 105.5L209.4 105.5L220.3 118.0L185.9 118.0ZM13.7 118.0L48.2 118.0L42.4 133.3L4.2 133.3ZM82.6 118.0L117.0 118.0L118.9 133.3L80.7 133.3ZM151.4 118.0L185.9 118.0L195.4 133.3L157.2 133.3ZM-34.1 133.3L4.2 133.3L-7.8 152.5L-50.8 152.5ZM42.4 133.3L80.7 133.3L78.3 152.5L35.2 152.5ZM118.9 133.3L157.2 133.3L164.4 152.5L121.3 152.5ZM195.4 133.3L233.7 133.3L250.4 152.5L207.4 152.5ZM-7.8 152.5L35.2 152.5L26.0 177.1L-23.2 177.1ZM78.3 152.5L121.3 152.5L124.4 177.1L75.2 177.1ZM164.4 152.5L207.4 152.5L222.8 177.1L173.6 177.1ZM26.0 177.1L75.2 177.1L71.1 210.0L13.7 210.0ZM124.4 177.1L173.6 177.1L185.9 210.0L128.5 210.0ZM-43.7 210.0L13.7 210.0L-3.5 256.0L-72.4 256.0ZM71.1 210.0L128.5 210.0L134.2 256.0L65.4 256.0ZM185.9 210.0L243.3 210.0L272.0 256.0L203.1 256.0Z" fill="#050505"/></g>
<rect x="0" y="120" width="200" height="80" filter="url(#nzw)" opacity="0.26"/>
<rect x="0" y="0" width="200" height="37.2" fill="#7f7f7f"/>
<g clip-path="url(#cs)">
<circle cx="99.85" cy="99.50" r="77.4" fill="#121212"/>
<g filter="url(#bl2)"><path d="M23.5 97.4L23.5 98.3L23.5 99.2L23.5 100.1L23.5 101.1L23.5 102.0L23.5 102.9L25.6 103.2L25.5 102.3L25.4 101.4L25.3 100.5L25.2 99.6L25.1 98.7L25.1 97.7ZM23.9 107.7L24.0 108.5L24.1 109.3L24.2 110.0L24.3 110.8L24.4 111.6L24.5 112.4L27.7 112.5L27.5 111.7L27.2 111.0L27.0 110.2L26.8 109.5L26.7 108.7L26.5 107.9ZM25.3 116.3L25.5 116.9L25.6 117.6L25.8 118.2L25.9 118.9L26.1 119.5L26.3 120.1L30.5 119.8L30.3 119.3L30.0 118.7L29.7 118.1L29.5 117.5L29.2 116.8L29.0 116.2ZM27.7 124.5L27.7 124.7L27.8 124.9L27.8 125.0L27.9 125.2L28.0 125.3L28.0 125.5L33.1 124.8L33.0 124.6L32.9 124.5L32.8 124.3L32.7 124.2L32.7 124.0L32.6 123.9ZM28.4 126.7L28.5 126.9L28.6 127.2L28.7 127.4L28.8 127.6L28.9 127.9L29.0 128.1L34.5 127.1L34.3 126.9L34.2 126.7L34.1 126.5L33.9 126.2L33.8 126.0L33.7 125.8ZM29.8 130.0L30.0 130.4L30.2 130.8L30.3 131.2L30.5 131.6L30.7 132.0L30.9 132.4L37.0 130.9L36.8 130.5L36.5 130.2L36.3 129.8L36.0 129.5L35.8 129.1L35.5 128.7ZM32.6 135.8L33.0 136.6L33.5 137.4L34.0 138.2L34.4 139.0L34.9 139.8L35.4 140.6L42.8 137.7L42.2 137.0L41.6 136.4L41.0 135.7L40.4 135.1L39.8 134.4L39.2 133.7ZM40.7 147.9L42.5 149.9L44.3 152.0L46.2 153.9L48.1 155.7L50.1 157.5L52.1 159.2L60.7 151.2L58.7 150.1L56.7 148.9L54.8 147.7L52.8 146.3L50.8 144.9L48.9 143.3ZM79.0 173.0L85.9 174.6L92.8 175.6L99.9 175.9L106.9 175.6L113.8 174.6L120.7 173.0L115.9 159.5L110.5 160.3L105.2 160.8L99.9 161.0L94.5 160.8L89.2 160.3L83.8 159.5ZM147.6 159.2L149.6 157.5L151.6 155.7L153.5 153.9L155.4 152.0L157.2 149.9L159.0 147.9L150.8 143.3L148.9 144.9L146.9 146.3L144.9 147.7L143.0 148.9L141.0 150.1L139.0 151.2ZM164.3 140.6L164.8 139.8L165.3 139.0L165.7 138.2L166.2 137.4L166.7 136.6L167.1 135.8L160.5 133.7L159.9 134.4L159.3 135.1L158.7 135.7L158.1 136.4L157.5 137.0L156.9 137.7ZM168.8 132.4L169.0 132.0L169.2 131.6L169.4 131.2L169.5 130.8L169.7 130.4L169.9 130.0L164.2 128.7L163.9 129.1L163.7 129.5L163.4 129.8L163.2 130.2L162.9 130.5L162.7 130.9ZM170.7 128.1L170.8 127.9L170.9 127.6L171.0 127.4L171.1 127.2L171.2 126.9L171.3 126.7L166.0 125.8L165.9 126.0L165.8 126.2L165.6 126.5L165.5 126.7L165.4 126.9L165.2 127.1ZM171.7 125.5L171.7 125.3L171.8 125.2L171.9 125.0L171.9 124.9L172.0 124.7L172.0 124.5L167.1 123.9L167.0 124.0L167.0 124.2L166.9 124.3L166.8 124.5L166.7 124.6L166.6 124.8ZM173.4 120.1L173.6 119.5L173.8 118.9L173.9 118.2L174.1 117.6L174.2 116.9L174.4 116.3L170.7 116.2L170.5 116.8L170.2 117.5L170.0 118.1L169.7 118.7L169.4 119.3L169.2 119.8ZM175.2 112.4L175.3 111.6L175.4 110.8L175.5 110.0L175.6 109.3L175.7 108.5L175.8 107.7L173.2 107.9L173.0 108.7L172.9 109.5L172.7 110.2L172.5 111.0L172.2 111.7L172.0 112.5ZM176.2 102.9L176.2 102.0L176.2 101.1L176.2 100.1L176.2 99.2L176.2 98.3L176.2 97.4L174.6 97.7L174.6 98.7L174.5 99.6L174.4 100.5L174.3 101.4L174.2 102.3L174.1 103.2ZM25.2 90.7L25.1 91.9L25.1 93.1L25.0 94.3L25.0 95.4L25.1 96.6L25.1 97.7L27.0 98.2L26.8 97.0L26.7 95.8L26.6 94.7L26.5 93.5L26.4 92.3L26.4 91.1ZM25.6 103.2L25.7 104.0L25.9 104.8L26.0 105.6L26.1 106.4L26.3 107.2L26.5 107.9L29.8 108.3L29.5 107.5L29.3 106.7L29.0 106.0L28.7 105.2L28.5 104.4L28.2 103.7ZM27.7 112.5L27.9 113.1L28.1 113.7L28.3 114.4L28.5 115.0L28.8 115.6L29.0 116.2L33.9 116.2L33.6 115.6L33.2 115.0L32.9 114.4L32.5 113.8L32.2 113.2L31.9 112.6ZM30.5 119.8L30.8 120.5L31.2 121.2L31.5 121.9L31.9 122.6L32.2 123.2L32.6 123.9L39.1 123.0L38.6 122.5L38.1 121.9L37.6 121.3L37.2 120.7L36.7 120.1L36.2 119.5ZM33.1 124.8L33.2 124.9L33.3 125.1L33.4 125.3L33.5 125.5L33.6 125.6L33.7 125.8L40.6 124.7L40.5 124.5L40.3 124.4L40.2 124.2L40.1 124.1L39.9 123.9L39.8 123.8ZM34.5 127.1L34.6 127.4L34.8 127.7L35.0 127.9L35.2 128.2L35.4 128.5L35.5 128.7L43.1 127.1L42.8 126.9L42.6 126.7L42.4 126.5L42.1 126.2L41.9 126.0L41.7 125.8ZM37.0 130.9L37.4 131.3L37.8 131.8L38.1 132.3L38.5 132.8L38.9 133.2L39.2 133.7L47.7 131.1L47.3 130.7L46.8 130.4L46.3 130.0L45.9 129.6L45.4 129.2L45.0 128.9ZM42.8 137.7L43.7 138.7L44.8 139.7L45.8 140.6L46.8 141.5L47.8 142.4L48.9 143.3L58.5 138.0L57.4 137.4L56.3 136.8L55.2 136.2L54.1 135.5L52.9 134.8L51.8 134.1ZM60.7 151.2L64.7 153.2L68.6 154.9L72.4 156.4L76.3 157.6L80.1 158.6L83.8 159.5L88.3 147.2L85.5 146.8L82.6 146.3L79.6 145.7L76.4 144.9L73.2 144.0L69.7 142.9ZM115.9 159.5L119.6 158.6L123.4 157.6L127.3 156.4L131.1 154.9L135.0 153.2L139.0 151.2L130.0 142.9L126.5 144.0L123.3 144.9L120.1 145.7L117.1 146.3L114.2 146.8L111.4 147.2ZM150.8 143.3L151.9 142.4L152.9 141.5L153.9 140.6L154.9 139.7L156.0 138.7L156.9 137.7L147.9 134.1L146.8 134.8L145.6 135.5L144.5 136.2L143.4 136.8L142.3 137.4L141.2 138.0ZM160.5 133.7L160.8 133.2L161.2 132.8L161.6 132.3L161.9 131.8L162.3 131.3L162.7 130.9L154.7 128.9L154.3 129.2L153.8 129.6L153.4 130.0L152.9 130.4L152.4 130.7L152.0 131.1ZM164.2 128.7L164.3 128.5L164.5 128.2L164.7 127.9L164.9 127.7L165.1 127.4L165.2 127.1L158.0 125.8L157.8 126.0L157.6 126.2L157.3 126.5L157.1 126.7L156.9 126.9L156.6 127.1ZM166.0 125.8L166.1 125.6L166.2 125.5L166.3 125.3L166.4 125.1L166.5 124.9L166.6 124.8L159.9 123.8L159.8 123.9L159.6 124.1L159.5 124.2L159.4 124.4L159.2 124.5L159.1 124.7ZM167.1 123.9L167.5 123.2L167.8 122.6L168.2 121.9L168.5 121.2L168.9 120.5L169.2 119.8L163.5 119.5L163.0 120.1L162.5 120.7L162.1 121.3L161.6 121.9L161.1 122.5L160.6 123.0ZM170.7 116.2L170.9 115.6L171.2 115.0L171.4 114.4L171.6 113.7L171.8 113.1L172.0 112.5L167.8 112.6L167.5 113.2L167.2 113.8L166.8 114.4L166.5 115.0L166.1 115.6L165.8 116.2ZM173.2 107.9L173.4 107.2L173.6 106.4L173.7 105.6L173.8 104.8L174.0 104.0L174.1 103.2L171.5 103.7L171.2 104.4L171.0 105.2L170.7 106.0L170.4 106.7L170.2 107.5L169.9 108.3ZM174.6 97.7L174.6 96.6L174.7 95.4L174.7 94.3L174.6 93.1L174.6 91.9L174.5 90.7L173.3 91.1L173.3 92.3L173.2 93.5L173.1 94.7L173.0 95.8L172.9 97.0L172.7 98.2ZM27.0 98.2L27.1 99.1L27.3 100.0L27.5 100.9L27.7 101.9L28.0 102.8L28.2 103.7L31.4 104.2L30.9 103.3L30.5 102.4L30.2 101.5L29.8 100.5L29.5 99.6L29.2 98.7ZM29.8 108.3L30.2 109.0L30.5 109.7L30.8 110.5L31.2 111.2L31.5 111.9L31.9 112.6L37.1 112.8L36.5 112.1L36.0 111.5L35.5 110.8L35.0 110.1L34.5 109.4L34.0 108.7ZM33.9 116.2L34.3 116.7L34.7 117.3L35.0 117.8L35.4 118.4L35.8 118.9L36.2 119.5L43.2 119.0L42.6 118.5L42.1 118.0L41.6 117.5L41.1 117.1L40.6 116.6L40.0 116.0ZM39.1 123.0L39.2 123.2L39.3 123.3L39.5 123.4L39.6 123.5L39.7 123.7L39.8 123.8L47.8 122.6L47.7 122.5L47.6 122.4L47.4 122.3L47.3 122.2L47.1 122.1L47.0 122.0ZM40.6 124.7L40.8 124.9L41.0 125.0L41.2 125.2L41.3 125.4L41.5 125.6L41.7 125.8L50.2 124.2L50.0 124.1L49.8 123.9L49.5 123.8L49.3 123.6L49.1 123.5L48.9 123.3ZM43.1 127.1L43.4 127.4L43.7 127.7L44.0 128.0L44.4 128.3L44.7 128.6L45.0 128.9L54.1 126.6L53.7 126.3L53.4 126.1L53.0 125.9L52.6 125.7L52.2 125.5L51.9 125.3ZM47.7 131.1L48.4 131.6L49.1 132.1L49.8 132.6L50.5 133.1L51.1 133.6L51.8 134.1L61.5 130.2L60.8 129.9L60.1 129.6L59.4 129.2L58.7 128.9L57.9 128.5L57.2 128.2ZM58.5 138.0L60.4 139.0L62.4 139.9L64.3 140.8L66.1 141.5L68.0 142.2L69.7 142.9L77.8 135.4L76.4 135.0L74.9 134.7L73.3 134.3L71.6 133.8L69.9 133.3L68.0 132.7ZM88.3 147.2L92.2 147.6L96.1 147.8L99.9 147.9L103.6 147.8L107.5 147.6L111.4 147.2L107.9 137.4L105.1 137.6L102.5 137.7L99.9 137.7L97.2 137.7L94.6 137.6L91.8 137.4ZM130.0 142.9L131.7 142.2L133.6 141.5L135.4 140.8L137.3 139.9L139.3 139.0L141.2 138.0L131.7 132.7L129.8 133.3L128.1 133.8L126.4 134.3L124.8 134.7L123.3 135.0L121.9 135.4ZM147.9 134.1L148.6 133.6L149.2 133.1L149.9 132.6L150.6 132.1L151.3 131.6L152.0 131.1L142.5 128.2L141.8 128.5L141.0 128.9L140.3 129.2L139.6 129.6L138.9 129.9L138.2 130.2ZM154.7 128.9L155.0 128.6L155.3 128.3L155.7 128.0L156.0 127.7L156.3 127.4L156.6 127.1L147.8 125.3L147.5 125.5L147.1 125.7L146.7 125.9L146.3 126.1L146.0 126.3L145.6 126.6ZM158.0 125.8L158.2 125.6L158.4 125.4L158.5 125.2L158.7 125.0L158.9 124.9L159.1 124.7L150.8 123.3L150.6 123.5L150.4 123.6L150.2 123.8L149.9 123.9L149.7 124.1L149.5 124.2ZM159.9 123.8L160.0 123.7L160.1 123.5L160.2 123.4L160.4 123.3L160.5 123.2L160.6 123.0L152.7 122.0L152.6 122.1L152.4 122.2L152.3 122.3L152.1 122.4L152.0 122.5L151.9 122.6ZM163.5 119.5L163.9 118.9L164.3 118.4L164.7 117.8L165.0 117.3L165.4 116.7L165.8 116.2L159.7 116.0L159.1 116.6L158.6 117.1L158.1 117.5L157.6 118.0L157.1 118.5L156.5 119.0ZM167.8 112.6L168.2 111.9L168.5 111.2L168.9 110.5L169.2 109.7L169.5 109.0L169.9 108.3L165.7 108.7L165.2 109.4L164.7 110.1L164.2 110.8L163.7 111.5L163.2 112.1L162.6 112.8ZM171.5 103.7L171.7 102.8L172.0 101.9L172.2 100.9L172.4 100.0L172.6 99.1L172.7 98.2L170.5 98.7L170.2 99.6L169.9 100.5L169.5 101.5L169.2 102.4L168.8 103.3L168.3 104.2ZM27.7 91.5L27.8 92.7L28.0 93.9L28.2 95.1L28.5 96.3L28.8 97.5L29.2 98.7L31.0 99.1L30.5 97.9L30.0 96.7L29.6 95.5L29.3 94.3L28.9 93.1L28.7 91.9ZM31.4 104.2L31.8 104.9L32.2 105.7L32.6 106.4L33.1 107.2L33.5 107.9L34.0 108.7L37.8 109.0L37.1 108.3L36.5 107.6L35.9 106.9L35.3 106.1L34.8 105.4L34.2 104.6ZM37.1 112.8L37.6 113.4L38.0 113.9L38.5 114.5L39.0 115.0L39.5 115.5L40.0 116.0L45.5 115.9L44.9 115.5L44.3 115.0L43.7 114.5L43.0 114.0L42.4 113.5L41.8 113.0ZM43.2 119.0L43.8 119.5L44.4 120.0L45.1 120.5L45.7 121.0L46.3 121.5L47.0 122.0L53.8 121.1L53.1 120.7L52.3 120.3L51.6 119.9L50.8 119.4L50.1 119.0L49.3 118.5ZM47.8 122.6L48.0 122.7L48.2 122.8L48.4 123.0L48.5 123.1L48.7 123.2L48.9 123.3L55.9 122.2L55.7 122.1L55.5 122.0L55.3 121.9L55.1 121.8L54.9 121.7L54.7 121.6ZM50.2 124.2L50.5 124.4L50.7 124.6L51.0 124.7L51.3 124.9L51.6 125.1L51.9 125.3L59.2 123.7L58.9 123.6L58.6 123.4L58.3 123.3L58.0 123.2L57.7 123.0L57.4 122.9ZM54.1 126.6L54.6 126.8L55.1 127.1L55.6 127.4L56.2 127.7L56.7 127.9L57.2 128.2L64.7 125.9L64.2 125.7L63.7 125.5L63.1 125.3L62.6 125.1L62.1 124.9L61.5 124.7ZM61.5 130.2L62.7 130.7L63.8 131.1L64.9 131.6L66.0 132.0L67.0 132.3L68.0 132.7L74.9 128.9L74.0 128.6L73.1 128.4L72.1 128.2L71.1 127.9L70.0 127.6L69.0 127.3ZM77.8 135.4L80.6 135.9L83.1 136.4L85.5 136.7L87.7 137.0L89.8 137.2L91.8 137.4L93.9 131.5L92.4 131.4L90.8 131.3L89.1 131.2L87.3 131.0L85.3 130.8L83.2 130.4ZM107.9 137.4L109.9 137.2L112.0 137.0L114.2 136.7L116.6 136.4L119.1 135.9L121.9 135.4L116.5 130.4L114.4 130.8L112.4 131.0L110.6 131.2L108.9 131.3L107.3 131.4L105.8 131.5ZM131.7 132.7L132.7 132.3L133.7 132.0L134.8 131.6L135.9 131.1L137.0 130.7L138.2 130.2L130.7 127.3L129.7 127.6L128.6 127.9L127.6 128.2L126.6 128.4L125.7 128.6L124.8 128.9ZM142.5 128.2L143.0 127.9L143.5 127.7L144.1 127.4L144.6 127.1L145.1 126.8L145.6 126.6L138.2 124.7L137.6 124.9L137.1 125.1L136.6 125.3L136.0 125.5L135.5 125.7L135.0 125.9ZM147.8 125.3L148.1 125.1L148.4 124.9L148.7 124.7L149.0 124.6L149.2 124.4L149.5 124.2L142.3 122.9L142.0 123.0L141.7 123.2L141.4 123.3L141.1 123.4L140.8 123.6L140.5 123.7ZM150.8 123.3L151.0 123.2L151.2 123.1L151.3 123.0L151.5 122.8L151.7 122.7L151.9 122.6L145.0 121.6L144.8 121.7L144.6 121.8L144.4 121.9L144.2 122.0L144.0 122.1L143.8 122.2ZM152.7 122.0L153.4 121.5L154.0 121.0L154.6 120.5L155.3 120.0L155.9 119.5L156.5 119.0L150.4 118.5L149.6 119.0L148.9 119.4L148.1 119.9L147.4 120.3L146.6 120.7L145.9 121.1ZM159.7 116.0L160.2 115.5L160.7 115.0L161.2 114.5L161.7 113.9L162.1 113.4L162.6 112.8L157.9 113.0L157.3 113.5L156.7 114.0L156.0 114.5L155.4 115.0L154.8 115.5L154.2 115.9ZM165.7 108.7L166.2 107.9L166.6 107.2L167.1 106.4L167.5 105.7L167.9 104.9L168.3 104.2L165.5 104.6L164.9 105.4L164.4 106.1L163.8 106.9L163.2 107.6L162.6 108.3L161.9 109.0ZM170.5 98.7L170.9 97.5L171.2 96.3L171.5 95.1L171.7 93.9L171.9 92.7L172.0 91.5L171.0 91.9L170.8 93.1L170.4 94.3L170.1 95.5L169.7 96.7L169.2 97.9L168.7 99.1ZM31.0 99.1L31.5 100.1L32.0 101.0L32.5 101.9L33.0 102.8L33.6 103.7L34.2 104.6L36.8 105.0L36.1 104.1L35.3 103.2L34.6 102.3L34.0 101.4L33.3 100.5L32.7 99.5ZM37.8 109.0L38.4 109.7L39.1 110.4L39.7 111.1L40.4 111.7L41.1 112.3L41.8 113.0L46.1 113.1L45.3 112.5L44.5 111.9L43.6 111.3L42.8 110.7L42.0 110.0L41.2 109.4ZM45.5 115.9L46.2 116.4L46.8 116.9L47.4 117.3L48.1 117.7L48.7 118.1L49.3 118.5L54.8 118.1L54.1 117.8L53.4 117.4L52.7 117.1L52.0 116.7L51.2 116.3L50.5 115.9ZM53.8 121.1L53.9 121.2L54.1 121.3L54.3 121.3L54.4 121.4L54.6 121.5L54.7 121.6L60.7 120.7L60.6 120.7L60.4 120.6L60.2 120.5L60.0 120.4L59.9 120.4L59.7 120.3ZM55.9 122.2L56.2 122.3L56.4 122.4L56.6 122.5L56.9 122.6L57.1 122.8L57.4 122.9L63.5 121.7L63.2 121.7L63.0 121.6L62.7 121.5L62.5 121.4L62.2 121.3L62.0 121.2ZM59.2 123.7L59.6 123.9L60.0 124.0L60.4 124.2L60.8 124.4L61.2 124.5L61.5 124.7L67.7 123.1L67.3 123.0L66.9 122.9L66.5 122.8L66.1 122.6L65.7 122.5L65.3 122.4ZM64.7 125.9L65.4 126.1L66.2 126.4L66.9 126.6L67.6 126.8L68.3 127.1L69.0 127.3L74.7 125.0L74.1 124.8L73.5 124.7L72.8 124.5L72.1 124.4L71.4 124.2L70.7 124.0ZM74.9 128.9L76.5 129.2L78.0 129.5L79.4 129.8L80.7 130.0L82.0 130.3L83.2 130.4L86.9 127.0L85.9 126.9L84.9 126.8L83.8 126.6L82.6 126.4L81.4 126.2L80.0 126.0ZM93.9 131.5L96.0 131.6L97.9 131.7L99.9 131.7L101.8 131.7L103.7 131.6L105.8 131.5L104.4 127.6L102.8 127.7L101.3 127.7L99.9 127.7L98.4 127.7L96.9 127.7L95.3 127.6ZM116.5 130.4L117.7 130.3L119.0 130.0L120.3 129.8L121.7 129.5L123.2 129.2L124.8 128.9L119.7 126.0L118.3 126.2L117.1 126.4L115.9 126.6L114.8 126.8L113.8 126.9L112.8 127.0ZM130.7 127.3L131.4 127.1L132.1 126.8L132.8 126.6L133.5 126.4L134.3 126.1L135.0 125.9L129.0 124.0L128.3 124.2L127.6 124.4L126.9 124.5L126.2 124.7L125.6 124.8L125.0 125.0ZM138.2 124.7L138.5 124.5L138.9 124.4L139.3 124.2L139.7 124.0L140.1 123.9L140.5 123.7L134.4 122.4L134.0 122.5L133.6 122.6L133.2 122.8L132.8 122.9L132.4 123.0L132.0 123.1ZM142.3 122.9L142.6 122.8L142.8 122.6L143.1 122.5L143.3 122.4L143.5 122.3L143.8 122.2L137.7 121.2L137.5 121.3L137.2 121.4L137.0 121.5L136.7 121.6L136.5 121.7L136.2 121.7ZM145.0 121.6L145.1 121.5L145.3 121.4L145.4 121.3L145.6 121.3L145.8 121.2L145.9 121.1L140.0 120.3L139.8 120.4L139.7 120.4L139.5 120.5L139.3 120.6L139.1 120.7L139.0 120.7ZM150.4 118.5L151.0 118.1L151.6 117.7L152.3 117.3L152.9 116.9L153.5 116.4L154.2 115.9L149.2 115.9L148.5 116.3L147.7 116.7L147.0 117.1L146.3 117.4L145.6 117.8L144.9 118.1ZM157.9 113.0L158.6 112.3L159.3 111.7L160.0 111.1L160.6 110.4L161.3 109.7L161.9 109.0L158.5 109.4L157.7 110.0L156.9 110.7L156.1 111.3L155.2 111.9L154.4 112.5L153.6 113.1ZM165.5 104.6L166.1 103.7L166.7 102.8L167.2 101.9L167.7 101.0L168.2 100.1L168.7 99.1L167.0 99.5L166.4 100.5L165.7 101.4L165.1 102.3L164.4 103.2L163.6 104.1L162.9 105.0ZM29.5 92.2L29.9 93.4L30.4 94.6L30.9 95.9L31.4 97.1L32.1 98.3L32.7 99.5L34.4 99.9L33.6 98.7L32.8 97.4L32.1 96.2L31.4 94.9L30.8 93.7L30.3 92.4ZM36.8 105.0L37.5 105.8L38.2 106.5L38.9 107.3L39.7 108.0L40.4 108.7L41.2 109.4L44.7 109.7L43.8 109.0L42.9 108.3L42.0 107.6L41.1 106.9L40.2 106.2L39.4 105.4ZM46.1 113.1L46.9 113.6L47.6 114.1L48.3 114.6L49.0 115.0L49.8 115.4L50.5 115.9L55.4 115.8L54.6 115.4L53.8 115.0L52.9 114.6L52.1 114.2L51.3 113.7L50.4 113.3ZM54.8 118.1L55.7 118.5L56.5 118.9L57.3 119.3L58.1 119.6L58.9 120.0L59.7 120.3L65.3 119.6L64.5 119.3L63.7 119.0L62.8 118.7L62.0 118.4L61.1 118.1L60.2 117.8ZM60.7 120.7L60.9 120.8L61.1 120.9L61.3 121.0L61.6 121.0L61.8 121.1L62.0 121.2L67.6 120.3L67.4 120.2L67.2 120.1L67.0 120.1L66.8 120.0L66.6 120.0L66.4 119.9ZM63.5 121.7L63.8 121.9L64.1 122.0L64.4 122.1L64.7 122.2L65.0 122.3L65.3 122.4L70.9 121.2L70.7 121.1L70.4 121.0L70.0 120.9L69.7 120.9L69.4 120.8L69.1 120.7ZM67.7 123.1L68.2 123.3L68.7 123.4L69.2 123.6L69.8 123.7L70.2 123.9L70.7 124.0L76.1 122.3L75.6 122.3L75.2 122.2L74.7 122.1L74.2 121.9L73.7 121.8L73.2 121.7ZM74.7 125.0L75.7 125.2L76.7 125.4L77.5 125.6L78.4 125.7L79.2 125.9L80.0 126.0L84.2 123.7L83.6 123.6L82.9 123.5L82.1 123.4L81.3 123.3L80.5 123.2L79.7 123.0ZM86.9 127.0L88.6 127.2L90.2 127.3L91.6 127.4L92.9 127.5L94.2 127.6L95.3 127.6L96.4 124.6L95.5 124.6L94.6 124.6L93.5 124.5L92.4 124.5L91.2 124.4L89.8 124.3ZM104.4 127.6L105.5 127.6L106.8 127.5L108.1 127.4L109.5 127.3L111.1 127.2L112.8 127.0L109.9 124.3L108.5 124.4L107.3 124.5L106.2 124.5L105.1 124.6L104.2 124.6L103.3 124.6ZM119.7 126.0L120.5 125.9L121.3 125.7L122.2 125.6L123.0 125.4L124.0 125.2L125.0 125.0L120.0 123.0L119.2 123.2L118.4 123.3L117.6 123.4L116.8 123.5L116.1 123.6L115.5 123.7ZM129.0 124.0L129.5 123.9L129.9 123.7L130.5 123.6L131.0 123.4L131.5 123.3L132.0 123.1L126.5 121.7L126.0 121.8L125.5 121.9L125.0 122.1L124.5 122.2L124.1 122.3L123.6 122.3ZM134.4 122.4L134.7 122.3L135.0 122.2L135.3 122.1L135.6 122.0L135.9 121.9L136.2 121.7L130.6 120.7L130.3 120.8L130.0 120.9L129.7 120.9L129.3 121.0L129.0 121.1L128.8 121.2ZM137.7 121.2L137.9 121.1L138.1 121.0L138.4 121.0L138.6 120.9L138.8 120.8L139.0 120.7L133.3 119.9L133.1 120.0L132.9 120.0L132.7 120.1L132.5 120.1L132.3 120.2L132.1 120.3ZM140.0 120.3L140.8 120.0L141.6 119.6L142.4 119.3L143.2 118.9L144.0 118.5L144.9 118.1L139.5 117.8L138.6 118.1L137.7 118.4L136.9 118.7L136.0 119.0L135.2 119.3L134.4 119.6ZM149.2 115.9L149.9 115.4L150.7 115.0L151.4 114.6L152.1 114.1L152.8 113.6L153.6 113.1L149.3 113.3L148.4 113.7L147.6 114.2L146.8 114.6L145.9 115.0L145.1 115.4L144.3 115.8ZM158.5 109.4L159.3 108.7L160.0 108.0L160.8 107.3L161.5 106.5L162.2 105.8L162.9 105.0L160.3 105.4L159.5 106.2L158.6 106.9L157.7 107.6L156.8 108.3L155.9 109.0L155.0 109.7ZM167.0 99.5L167.6 98.3L168.3 97.1L168.8 95.9L169.3 94.6L169.8 93.4L170.2 92.2L169.4 92.4L168.9 93.7L168.3 94.9L167.6 96.2L166.9 97.4L166.1 98.7L165.3 99.9ZM34.4 99.9L35.1 100.9L35.9 101.8L36.7 102.7L37.6 103.6L38.5 104.5L39.4 105.4L41.8 105.8L40.7 104.9L39.6 104.0L38.6 103.1L37.7 102.2L36.8 101.2L35.9 100.2ZM44.7 109.7L45.6 110.3L46.6 111.0L47.5 111.6L48.5 112.2L49.5 112.7L50.4 113.3L54.4 113.4L53.3 112.9L52.2 112.4L51.1 111.8L50.0 111.2L49.0 110.6L47.9 110.0ZM55.4 115.8L56.2 116.1L57.0 116.5L57.8 116.8L58.6 117.2L59.4 117.5L60.2 117.8L64.9 117.4L64.1 117.2L63.3 116.9L62.5 116.6L61.6 116.3L60.8 116.0L59.9 115.7ZM65.3 119.6L65.5 119.6L65.7 119.7L65.8 119.7L66.0 119.8L66.2 119.8L66.4 119.9L71.2 119.2L71.1 119.1L70.9 119.1L70.7 119.1L70.6 119.0L70.4 119.0L70.2 118.9ZM67.6 120.3L67.9 120.3L68.1 120.4L68.4 120.5L68.6 120.6L68.9 120.6L69.1 120.7L73.9 119.8L73.7 119.7L73.5 119.7L73.2 119.6L73.0 119.6L72.7 119.5L72.5 119.5ZM70.9 121.2L71.3 121.3L71.7 121.4L72.1 121.5L72.5 121.6L72.9 121.6L73.2 121.7L77.8 120.6L77.5 120.5L77.1 120.4L76.8 120.4L76.4 120.3L76.1 120.2L75.7 120.2ZM76.1 122.3L76.7 122.5L77.3 122.6L78.0 122.7L78.5 122.8L79.1 122.9L79.7 123.0L83.6 121.5L83.1 121.4L82.6 121.3L82.1 121.3L81.5 121.2L81.0 121.1L80.4 121.0ZM84.2 123.7L85.4 123.8L86.4 123.9L87.4 124.0L88.2 124.1L89.1 124.2L89.8 124.3L92.0 122.3L91.4 122.2L90.7 122.2L90.0 122.1L89.2 122.1L88.4 122.0L87.4 121.9ZM96.4 124.6L97.6 124.7L98.7 124.7L99.9 124.7L101.0 124.7L102.1 124.7L103.3 124.6L102.5 122.5L101.6 122.5L100.7 122.5L99.9 122.5L99.0 122.5L98.1 122.5L97.2 122.5ZM109.9 124.3L110.6 124.2L111.5 124.1L112.3 124.0L113.3 123.9L114.3 123.8L115.5 123.7L112.3 121.9L111.3 122.0L110.5 122.1L109.7 122.1L109.0 122.2L108.3 122.2L107.7 122.3ZM120.0 123.0L120.6 122.9L121.2 122.8L121.7 122.7L122.4 122.6L123.0 122.5L123.6 122.3L119.3 121.0L118.7 121.1L118.2 121.2L117.6 121.3L117.1 121.3L116.6 121.4L116.1 121.5ZM126.5 121.7L126.8 121.6L127.2 121.6L127.6 121.5L128.0 121.4L128.4 121.3L128.8 121.2L124.0 120.2L123.6 120.2L123.3 120.3L122.9 120.4L122.6 120.4L122.2 120.5L121.9 120.6ZM130.6 120.7L130.8 120.6L131.1 120.6L131.3 120.5L131.6 120.4L131.8 120.3L132.1 120.3L127.2 119.5L127.0 119.5L126.7 119.6L126.5 119.6L126.2 119.7L126.0 119.7L125.8 119.8ZM133.3 119.9L133.5 119.8L133.7 119.8L133.9 119.7L134.0 119.7L134.2 119.6L134.4 119.6L129.5 118.9L129.3 119.0L129.1 119.0L129.0 119.1L128.8 119.1L128.6 119.1L128.5 119.2ZM139.5 117.8L140.3 117.5L141.1 117.2L141.9 116.8L142.7 116.5L143.5 116.1L144.3 115.8L139.8 115.7L138.9 116.0L138.1 116.3L137.2 116.6L136.4 116.9L135.6 117.2L134.8 117.4ZM149.3 113.3L150.2 112.7L151.2 112.2L152.2 111.6L153.1 111.0L154.1 110.3L155.0 109.7L151.8 110.0L150.7 110.6L149.7 111.2L148.6 111.8L147.5 112.4L146.4 112.9L145.3 113.4ZM160.3 105.4L161.2 104.5L162.1 103.6L163.0 102.7L163.8 101.8L164.6 100.9L165.3 99.9L163.8 100.2L162.9 101.2L162.0 102.2L161.1 103.1L160.1 104.0L159.0 104.9L157.9 105.8ZM31.1 92.6L31.7 93.9L32.3 95.2L33.1 96.5L34.0 97.8L34.9 99.0L35.9 100.2L37.3 100.6L36.1 99.3L35.1 98.0L34.1 96.8L33.2 95.5L32.4 94.2L31.7 92.9ZM41.8 105.8L42.7 106.5L43.7 107.3L44.7 108.0L45.8 108.7L46.8 109.3L47.9 110.0L51.0 110.3L49.8 109.7L48.6 109.0L47.4 108.3L46.3 107.6L45.1 106.9L44.0 106.2ZM54.4 113.4L55.3 113.8L56.3 114.2L57.2 114.6L58.1 115.0L59.0 115.4L59.9 115.7L64.1 115.6L63.2 115.3L62.2 115.0L61.2 114.7L60.2 114.3L59.2 113.9L58.2 113.5ZM64.9 117.4L65.9 117.7L66.8 118.0L67.7 118.2L68.5 118.5L69.4 118.7L70.2 118.9L74.7 118.3L73.9 118.2L73.0 118.0L72.2 117.8L71.3 117.6L70.4 117.4L69.4 117.1ZM71.2 119.2L71.5 119.2L71.7 119.3L71.9 119.3L72.1 119.4L72.3 119.4L72.5 119.5L76.9 118.8L76.7 118.7L76.5 118.7L76.3 118.6L76.1 118.6L75.9 118.6L75.7 118.5ZM73.9 119.8L74.2 119.9L74.5 119.9L74.8 120.0L75.1 120.0L75.4 120.1L75.7 120.2L79.9 119.3L79.6 119.2L79.3 119.2L79.1 119.1L78.8 119.1L78.5 119.1L78.2 119.0ZM77.8 120.6L78.3 120.7L78.7 120.7L79.2 120.8L79.6 120.9L80.0 120.9L80.4 121.0L84.1 119.9L83.7 119.8L83.4 119.8L83.0 119.7L82.6 119.7L82.2 119.6L81.8 119.6ZM83.6 121.5L84.3 121.6L85.0 121.6L85.7 121.7L86.3 121.8L86.9 121.8L87.4 121.9L90.0 120.4L89.6 120.4L89.1 120.4L88.6 120.3L88.0 120.3L87.5 120.2L86.8 120.2ZM92.0 122.3L93.1 122.3L94.1 122.4L94.9 122.4L95.7 122.4L96.5 122.5L97.2 122.5L97.8 120.8L97.2 120.8L96.7 120.8L96.0 120.8L95.4 120.7L94.6 120.7L93.7 120.7ZM102.5 122.5L103.2 122.5L104.0 122.4L104.8 122.4L105.6 122.4L106.6 122.3L107.7 122.3L106.0 120.7L105.1 120.7L104.3 120.7L103.7 120.8L103.0 120.8L102.5 120.8L101.9 120.8ZM112.3 121.9L112.8 121.8L113.4 121.8L114.0 121.7L114.7 121.6L115.4 121.6L116.1 121.5L112.9 120.2L112.2 120.2L111.7 120.3L111.1 120.3L110.6 120.4L110.1 120.4L109.7 120.4ZM119.3 121.0L119.7 120.9L120.1 120.9L120.5 120.8L121.0 120.7L121.4 120.7L121.9 120.6L117.9 119.6L117.5 119.6L117.1 119.7L116.7 119.7L116.3 119.8L116.0 119.8L115.6 119.9ZM124.0 120.2L124.3 120.1L124.6 120.0L124.9 120.0L125.2 119.9L125.5 119.9L125.8 119.8L121.5 119.0L121.2 119.1L120.9 119.1L120.6 119.1L120.4 119.2L120.1 119.2L119.8 119.3ZM127.2 119.5L127.4 119.4L127.6 119.4L127.8 119.3L128.0 119.3L128.2 119.2L128.5 119.2L124.0 118.5L123.8 118.6L123.6 118.6L123.4 118.6L123.2 118.7L123.0 118.7L122.8 118.8ZM129.5 118.9L130.3 118.7L131.2 118.5L132.0 118.2L132.9 118.0L133.8 117.7L134.8 117.4L130.3 117.1L129.3 117.4L128.4 117.6L127.5 117.8L126.7 118.0L125.8 118.2L125.0 118.3ZM139.8 115.7L140.7 115.4L141.6 115.0L142.5 114.6L143.4 114.2L144.4 113.8L145.3 113.4L141.5 113.5L140.5 113.9L139.5 114.3L138.5 114.7L137.5 115.0L136.5 115.3L135.6 115.6ZM151.8 110.0L152.9 109.3L153.9 108.7L155.0 108.0L156.0 107.3L157.0 106.5L157.9 105.8L155.7 106.2L154.6 106.9L153.4 107.6L152.3 108.3L151.1 109.0L149.9 109.7L148.7 110.3ZM163.8 100.2L164.8 99.0L165.7 97.8L166.6 96.5L167.4 95.2L168.0 93.9L168.6 92.6L168.0 92.9L167.3 94.2L166.5 95.5L165.6 96.8L164.6 98.0L163.6 99.3L162.4 100.6ZM37.3 100.6L38.3 101.5L39.4 102.5L40.5 103.5L41.6 104.4L42.8 105.3L44.0 106.2L46.2 106.5L44.8 105.6L43.4 104.7L42.1 103.8L40.9 102.8L39.7 101.9L38.6 100.9ZM51.0 110.3L52.2 110.9L53.4 111.5L54.6 112.0L55.8 112.6L57.0 113.1L58.2 113.5L61.9 113.7L60.6 113.2L59.2 112.8L57.9 112.3L56.6 111.7L55.2 111.2L53.9 110.6ZM64.1 115.6L65.1 115.9L66.0 116.2L66.9 116.4L67.7 116.7L68.6 116.9L69.4 117.1L73.6 116.8L72.8 116.7L71.9 116.5L71.0 116.3L70.1 116.0L69.1 115.8L68.2 115.6ZM74.7 118.3L74.8 118.4L75.0 118.4L75.2 118.4L75.4 118.5L75.5 118.5L75.7 118.5L79.7 117.9L79.5 117.9L79.4 117.9L79.2 117.9L79.1 117.8L78.9 117.8L78.7 117.8ZM76.9 118.8L77.1 118.8L77.3 118.8L77.6 118.9L77.8 118.9L78.0 119.0L78.2 119.0L82.1 118.3L81.9 118.3L81.7 118.2L81.4 118.2L81.2 118.2L81.0 118.1L80.8 118.1ZM79.9 119.3L80.2 119.3L80.5 119.4L80.9 119.4L81.2 119.5L81.5 119.5L81.8 119.6L85.2 118.7L85.0 118.7L84.7 118.6L84.4 118.6L84.1 118.6L83.8 118.5L83.5 118.5ZM84.1 119.9L84.6 119.9L85.1 120.0L85.6 120.0L86.0 120.1L86.4 120.1L86.8 120.2L89.5 119.1L89.2 119.1L88.9 119.0L88.5 119.0L88.1 119.0L87.7 118.9L87.2 118.9ZM90.0 120.4L90.8 120.5L91.5 120.6L92.1 120.6L92.7 120.6L93.2 120.6L93.7 120.7L95.1 119.4L94.7 119.4L94.3 119.4L93.8 119.4L93.3 119.3L92.8 119.3L92.2 119.3ZM97.8 120.8L98.5 120.8L99.2 120.8L99.9 120.8L100.5 120.8L101.2 120.8L101.9 120.8L101.5 119.5L100.9 119.5L100.4 119.5L99.9 119.5L99.3 119.5L98.8 119.5L98.2 119.5ZM106.0 120.7L106.5 120.6L107.0 120.6L107.6 120.6L108.2 120.6L108.9 120.5L109.7 120.4L107.5 119.3L106.9 119.3L106.4 119.3L105.9 119.4L105.4 119.4L105.0 119.4L104.6 119.4ZM112.9 120.2L113.3 120.1L113.7 120.1L114.1 120.0L114.6 120.0L115.1 119.9L115.6 119.9L112.5 118.9L112.0 118.9L111.6 119.0L111.2 119.0L110.8 119.0L110.5 119.1L110.2 119.1ZM117.9 119.6L118.2 119.5L118.5 119.5L118.8 119.4L119.2 119.4L119.5 119.3L119.8 119.3L116.2 118.5L115.9 118.5L115.6 118.6L115.3 118.6L115.0 118.6L114.7 118.7L114.5 118.7ZM121.5 119.0L121.7 119.0L121.9 118.9L122.1 118.9L122.4 118.8L122.6 118.8L122.8 118.8L118.9 118.1L118.7 118.1L118.5 118.2L118.3 118.2L118.0 118.2L117.8 118.3L117.6 118.3ZM124.0 118.5L124.2 118.5L124.3 118.5L124.5 118.4L124.7 118.4L124.9 118.4L125.0 118.3L121.0 117.8L120.8 117.8L120.6 117.8L120.5 117.9L120.3 117.9L120.2 117.9L120.0 117.9ZM130.3 117.1L131.1 116.9L132.0 116.7L132.8 116.4L133.7 116.2L134.6 115.9L135.6 115.6L131.5 115.6L130.6 115.8L129.6 116.0L128.7 116.3L127.8 116.5L126.9 116.7L126.1 116.8ZM141.5 113.5L142.7 113.1L143.9 112.6L145.1 112.0L146.3 111.5L147.5 110.9L148.7 110.3L145.8 110.6L144.5 111.2L143.1 111.7L141.8 112.3L140.5 112.8L139.1 113.2L137.8 113.7ZM155.7 106.2L156.9 105.3L158.1 104.4L159.2 103.5L160.3 102.5L161.4 101.5L162.4 100.6L161.1 100.9L160.0 101.9L158.8 102.8L157.6 103.8L156.3 104.7L154.9 105.6L153.5 106.5ZM32.3 93.0L33.1 94.4L34.0 95.7L35.0 97.0L36.1 98.3L37.3 99.6L38.6 100.9L39.7 101.1L38.3 99.8L36.9 98.5L35.7 97.2L34.6 95.9L33.6 94.5L32.7 93.2ZM46.2 106.5L47.4 107.2L48.7 108.0L49.9 108.7L51.3 109.3L52.6 110.0L53.9 110.6L56.5 110.8L55.0 110.2L53.6 109.6L52.1 108.9L50.7 108.2L49.3 107.5L48.0 106.8ZM61.9 113.7L63.0 114.0L64.0 114.4L65.1 114.7L66.2 115.0L67.2 115.3L68.2 115.6L71.7 115.5L70.6 115.3L69.6 115.0L68.5 114.7L67.4 114.4L66.2 114.1L65.0 113.8ZM73.6 116.8L74.6 117.0L75.5 117.2L76.3 117.4L77.2 117.5L78.0 117.7L78.7 117.8L82.1 117.3L81.4 117.3L80.6 117.1L79.8 117.0L79.0 116.9L78.1 116.7L77.2 116.6ZM79.7 117.9L79.9 118.0L80.1 118.0L80.3 118.0L80.4 118.1L80.6 118.1L80.8 118.1L84.0 117.6L83.8 117.6L83.7 117.6L83.5 117.5L83.3 117.5L83.2 117.5L83.0 117.5ZM82.1 118.3L82.3 118.3L82.6 118.4L82.8 118.4L83.1 118.4L83.3 118.5L83.5 118.5L86.5 117.9L86.3 117.8L86.0 117.8L85.8 117.8L85.6 117.8L85.4 117.7L85.2 117.7ZM85.2 118.7L85.6 118.7L86.0 118.8L86.3 118.8L86.6 118.8L86.9 118.9L87.2 118.9L89.7 118.1L89.4 118.1L89.2 118.1L88.9 118.1L88.6 118.1L88.3 118.0L88.0 118.0ZM89.5 119.1L90.1 119.1L90.5 119.2L91.0 119.2L91.4 119.2L91.8 119.2L92.2 119.3L93.8 118.4L93.5 118.4L93.1 118.4L92.8 118.3L92.4 118.3L92.0 118.3L91.6 118.3ZM95.1 119.4L95.8 119.4L96.4 119.4L96.9 119.5L97.4 119.5L97.8 119.5L98.2 119.5L98.6 118.5L98.3 118.5L97.9 118.5L97.5 118.5L97.1 118.5L96.6 118.5L96.1 118.5ZM101.5 119.5L101.9 119.5L102.3 119.5L102.8 119.5L103.3 119.4L103.9 119.4L104.6 119.4L103.6 118.5L103.1 118.5L102.6 118.5L102.2 118.5L101.8 118.5L101.4 118.5L101.1 118.5ZM107.5 119.3L107.9 119.2L108.3 119.2L108.7 119.2L109.2 119.2L109.6 119.1L110.2 119.1L108.1 118.3L107.7 118.3L107.3 118.3L106.9 118.3L106.6 118.4L106.2 118.4L105.9 118.4ZM112.5 118.9L112.8 118.9L113.1 118.8L113.4 118.8L113.7 118.8L114.1 118.7L114.5 118.7L111.7 118.0L111.4 118.0L111.1 118.1L110.8 118.1L110.5 118.1L110.3 118.1L110.0 118.1ZM116.2 118.5L116.4 118.5L116.6 118.4L116.9 118.4L117.1 118.4L117.4 118.3L117.6 118.3L114.5 117.7L114.3 117.7L114.1 117.8L113.9 117.8L113.7 117.8L113.4 117.8L113.2 117.9ZM118.9 118.1L119.1 118.1L119.3 118.1L119.4 118.0L119.6 118.0L119.8 118.0L120.0 117.9L116.7 117.5L116.5 117.5L116.4 117.5L116.2 117.5L116.0 117.6L115.9 117.6L115.7 117.6ZM121.0 117.8L121.7 117.7L122.5 117.5L123.4 117.4L124.2 117.2L125.1 117.0L126.1 116.8L122.5 116.6L121.6 116.7L120.7 116.9L119.9 117.0L119.1 117.1L118.3 117.3L117.6 117.3ZM131.5 115.6L132.5 115.3L133.5 115.0L134.6 114.7L135.7 114.4L136.7 114.0L137.8 113.7L134.7 113.8L133.5 114.1L132.3 114.4L131.2 114.7L130.1 115.0L129.1 115.3L128.0 115.5ZM145.8 110.6L147.1 110.0L148.4 109.3L149.8 108.7L151.0 108.0L152.3 107.2L153.5 106.5L151.7 106.8L150.4 107.5L149.0 108.2L147.6 108.9L146.1 109.6L144.7 110.2L143.2 110.8ZM161.1 100.9L162.4 99.6L163.6 98.3L164.7 97.0L165.7 95.7L166.6 94.4L167.4 93.0L167.0 93.2L166.1 94.5L165.1 95.9L164.0 97.2L162.8 98.5L161.4 99.8L160.0 101.1ZM39.7 101.1L40.9 102.1L42.2 103.1L43.6 104.1L45.0 105.0L46.5 105.9L48.0 106.8L49.7 107.1L48.0 106.2L46.4 105.3L44.9 104.3L43.4 103.3L42.0 102.4L40.7 101.3ZM56.5 110.8L57.9 111.4L59.4 111.9L60.8 112.4L62.2 112.9L63.7 113.4L65.0 113.8L68.1 113.9L66.6 113.5L65.1 113.1L63.6 112.6L62.0 112.1L60.4 111.6L58.9 111.1ZM71.7 115.5L72.7 115.7L73.6 115.9L74.6 116.1L75.5 116.3L76.3 116.4L77.2 116.6L80.5 116.4L79.7 116.2L78.8 116.1L77.9 116.0L77.0 115.8L76.0 115.6L75.0 115.4ZM82.1 117.3L82.2 117.4L82.4 117.4L82.5 117.4L82.7 117.4L82.8 117.4L83.0 117.5L86.0 117.0L85.8 117.0L85.7 117.0L85.6 117.0L85.4 117.0L85.3 117.0L85.1 116.9ZM84.0 117.6L84.2 117.6L84.4 117.6L84.6 117.7L84.8 117.7L85.0 117.7L85.2 117.7L87.9 117.2L87.7 117.2L87.6 117.2L87.4 117.2L87.2 117.2L87.0 117.1L86.9 117.1ZM86.5 117.9L86.7 117.9L87.0 117.9L87.3 117.9L87.5 118.0L87.7 118.0L88.0 118.0L90.3 117.4L90.1 117.4L89.9 117.4L89.7 117.4L89.5 117.3L89.3 117.3L89.0 117.3ZM89.7 118.1L90.0 118.2L90.4 118.2L90.7 118.2L91.0 118.2L91.3 118.3L91.6 118.3L93.3 117.6L93.1 117.6L92.9 117.6L92.6 117.5L92.3 117.5L92.1 117.5L91.8 117.5ZM93.8 118.4L94.3 118.4L94.7 118.4L95.1 118.4L95.5 118.4L95.8 118.5L96.1 118.5L96.9 117.7L96.7 117.7L96.4 117.7L96.1 117.7L95.8 117.7L95.5 117.7L95.1 117.7ZM98.6 118.5L99.0 118.5L99.4 118.5L99.9 118.5L100.3 118.5L100.7 118.5L101.1 118.5L100.8 117.7L100.5 117.7L100.2 117.7L99.9 117.7L99.5 117.7L99.2 117.7L98.9 117.7ZM103.6 118.5L103.9 118.5L104.2 118.4L104.6 118.4L105.0 118.4L105.4 118.4L105.9 118.4L104.6 117.7L104.2 117.7L103.9 117.7L103.6 117.7L103.3 117.7L103.0 117.7L102.8 117.7ZM108.1 118.3L108.4 118.3L108.7 118.2L109.0 118.2L109.3 118.2L109.7 118.2L110.0 118.1L107.9 117.5L107.6 117.5L107.4 117.5L107.1 117.5L106.8 117.6L106.6 117.6L106.4 117.6ZM111.7 118.0L112.0 118.0L112.2 118.0L112.4 117.9L112.7 117.9L113.0 117.9L113.2 117.9L110.7 117.3L110.4 117.3L110.2 117.3L110.0 117.4L109.8 117.4L109.6 117.4L109.4 117.4ZM114.5 117.7L114.7 117.7L114.9 117.7L115.1 117.7L115.3 117.6L115.5 117.6L115.7 117.6L112.8 117.1L112.7 117.1L112.5 117.2L112.3 117.2L112.1 117.2L112.0 117.2L111.8 117.2ZM116.7 117.5L116.9 117.4L117.0 117.4L117.2 117.4L117.3 117.4L117.5 117.4L117.6 117.3L114.6 116.9L114.4 117.0L114.3 117.0L114.1 117.0L114.0 117.0L113.9 117.0L113.7 117.0ZM122.5 116.6L123.4 116.4L124.2 116.3L125.1 116.1L126.1 115.9L127.0 115.7L128.0 115.5L124.7 115.4L123.7 115.6L122.7 115.8L121.8 116.0L120.9 116.1L120.0 116.2L119.2 116.4ZM134.7 113.8L136.0 113.4L137.5 112.9L138.9 112.4L140.3 111.9L141.8 111.4L143.2 110.8L140.8 111.1L139.3 111.6L137.7 112.1L136.1 112.6L134.6 113.1L133.1 113.5L131.6 113.9ZM151.7 106.8L153.2 105.9L154.7 105.0L156.1 104.1L157.5 103.1L158.8 102.1L160.0 101.1L159.0 101.3L157.7 102.4L156.3 103.3L154.8 104.3L153.3 105.3L151.7 106.2L150.0 107.1ZM33.2 93.3L34.1 94.7L35.2 96.0L36.4 97.4L37.7 98.7L39.1 100.1L40.7 101.3L41.5 101.5L39.9 100.2L38.3 98.9L36.9 97.6L35.7 96.2L34.5 94.8L33.5 93.4ZM49.7 107.1L51.1 107.8L52.7 108.5L54.2 109.2L55.7 109.8L57.3 110.5L58.9 111.1L61.0 111.3L59.3 110.7L57.7 110.1L56.0 109.4L54.3 108.7L52.7 108.0L51.1 107.3ZM68.1 113.9L69.3 114.2L70.5 114.5L71.7 114.8L72.8 115.0L73.9 115.2L75.0 115.4L78.0 115.4L76.9 115.2L75.8 115.0L74.6 114.8L73.4 114.5L72.1 114.3L70.8 114.0ZM80.5 116.4L81.4 116.5L82.2 116.6L83.0 116.7L83.8 116.8L84.5 116.9L85.1 116.9L87.7 116.6L87.1 116.5L86.5 116.5L85.8 116.4L85.1 116.3L84.3 116.3L83.4 116.2ZM86.0 117.0L86.1 117.0L86.3 117.1L86.4 117.1L86.6 117.1L86.7 117.1L86.9 117.1L89.3 116.7L89.1 116.7L89.0 116.7L88.9 116.7L88.7 116.7L88.6 116.7L88.5 116.7ZM87.9 117.2L88.1 117.2L88.3 117.2L88.5 117.3L88.7 117.3L88.9 117.3L89.0 117.3L91.1 116.9L91.0 116.8L90.8 116.8L90.7 116.8L90.5 116.8L90.3 116.8L90.2 116.8ZM90.3 117.4L90.6 117.4L90.8 117.4L91.1 117.5L91.3 117.5L91.5 117.5L91.8 117.5L93.4 117.0L93.2 117.0L93.1 117.0L92.9 117.0L92.7 116.9L92.5 116.9L92.2 116.9ZM93.3 117.6L93.7 117.6L94.0 117.6L94.3 117.6L94.6 117.6L94.8 117.6L95.1 117.7L96.1 117.1L95.9 117.1L95.7 117.1L95.5 117.1L95.3 117.1L95.0 117.0L94.7 117.0ZM96.9 117.7L97.4 117.7L97.7 117.7L98.0 117.7L98.3 117.7L98.6 117.7L98.9 117.7L99.1 117.1L98.9 117.1L98.7 117.1L98.4 117.1L98.2 117.1L97.9 117.1L97.6 117.1ZM100.8 117.7L101.1 117.7L101.4 117.7L101.7 117.7L102.0 117.7L102.3 117.7L102.8 117.7L102.1 117.1L101.8 117.1L101.5 117.1L101.3 117.1L101.0 117.1L100.8 117.1L100.6 117.1ZM104.6 117.7L104.9 117.6L105.1 117.6L105.4 117.6L105.7 117.6L106.0 117.6L106.4 117.6L105.0 117.0L104.7 117.0L104.4 117.1L104.2 117.1L104.0 117.1L103.8 117.1L103.6 117.1ZM107.9 117.5L108.2 117.5L108.4 117.5L108.6 117.5L108.9 117.4L109.1 117.4L109.4 117.4L107.5 116.9L107.2 116.9L107.0 116.9L106.8 117.0L106.6 117.0L106.5 117.0L106.3 117.0ZM110.7 117.3L110.8 117.3L111.0 117.3L111.2 117.3L111.4 117.2L111.6 117.2L111.8 117.2L109.5 116.8L109.4 116.8L109.2 116.8L109.0 116.8L108.9 116.8L108.7 116.8L108.6 116.9ZM112.8 117.1L113.0 117.1L113.1 117.1L113.3 117.1L113.4 117.1L113.6 117.0L113.7 117.0L111.2 116.7L111.1 116.7L111.0 116.7L110.8 116.7L110.7 116.7L110.6 116.7L110.4 116.7ZM114.6 116.9L115.2 116.9L115.9 116.8L116.7 116.7L117.5 116.6L118.3 116.5L119.2 116.4L116.3 116.2L115.4 116.3L114.6 116.3L113.9 116.4L113.2 116.5L112.6 116.5L112.0 116.6ZM124.7 115.4L125.8 115.2L126.9 115.0L128.0 114.8L129.2 114.5L130.4 114.2L131.6 113.9L128.9 114.0L127.6 114.3L126.3 114.5L125.1 114.8L123.9 115.0L122.8 115.2L121.7 115.4ZM140.8 111.1L142.4 110.5L144.0 109.8L145.5 109.2L147.0 108.5L148.6 107.8L150.0 107.1L148.6 107.3L147.0 108.0L145.4 108.7L143.7 109.4L142.0 110.1L140.4 110.7L138.7 111.3ZM159.0 101.3L160.6 100.1L162.0 98.7L163.3 97.4L164.5 96.0L165.6 94.7L166.5 93.3L166.2 93.4L165.2 94.8L164.0 96.2L162.8 97.6L161.4 98.9L159.8 100.2L158.2 101.5ZM41.5 101.5L43.0 102.6L44.5 103.6L46.0 104.5L47.7 105.5L49.4 106.4L51.1 107.3L52.6 107.5L50.7 106.6L48.9 105.7L47.2 104.8L45.5 103.8L43.9 102.8L42.4 101.7ZM61.0 111.3L62.7 111.8L64.4 112.3L66.0 112.8L67.7 113.2L69.3 113.6L70.8 114.0L73.7 114.1L72.1 113.7L70.4 113.4L68.6 113.0L66.9 112.5L65.1 112.0L63.3 111.5ZM78.0 115.4L79.0 115.5L80.0 115.7L80.9 115.8L81.8 115.9L82.6 116.1L83.4 116.2L86.4 115.9L85.7 115.9L84.9 115.8L84.0 115.7L83.1 115.6L82.2 115.5L81.1 115.3ZM87.7 116.6L87.9 116.6L88.0 116.6L88.1 116.6L88.2 116.6L88.3 116.7L88.5 116.7L90.9 116.3L90.8 116.3L90.7 116.3L90.6 116.3L90.5 116.3L90.4 116.3L90.3 116.3ZM89.3 116.7L89.4 116.7L89.6 116.8L89.7 116.8L89.9 116.8L90.0 116.8L90.2 116.8L92.4 116.4L92.2 116.4L92.1 116.4L92.0 116.4L91.9 116.4L91.7 116.4L91.6 116.3ZM91.1 116.9L91.3 116.9L91.5 116.9L91.7 116.9L91.9 116.9L92.1 116.9L92.2 116.9L94.0 116.5L93.9 116.5L93.8 116.5L93.6 116.5L93.5 116.4L93.3 116.4L93.2 116.4ZM93.4 117.0L93.7 117.0L93.9 117.0L94.1 117.0L94.3 117.0L94.5 117.0L94.7 117.0L96.0 116.5L95.8 116.5L95.7 116.5L95.5 116.5L95.4 116.5L95.2 116.5L95.0 116.5ZM96.1 117.1L96.4 117.1L96.7 117.1L97.0 117.1L97.2 117.1L97.4 117.1L97.6 117.1L98.1 116.6L98.0 116.6L97.9 116.6L97.7 116.6L97.5 116.6L97.3 116.6L97.0 116.6ZM99.1 117.1L99.4 117.1L99.6 117.1L99.9 117.1L100.1 117.1L100.3 117.1L100.6 117.1L100.4 116.6L100.2 116.6L100.0 116.6L99.9 116.6L99.7 116.6L99.5 116.6L99.3 116.6ZM102.1 117.1L102.3 117.1L102.5 117.1L102.7 117.1L103.0 117.1L103.3 117.1L103.6 117.1L102.7 116.6L102.4 116.6L102.2 116.6L102.0 116.6L101.8 116.6L101.7 116.6L101.6 116.6ZM105.0 117.0L105.2 117.0L105.4 117.0L105.6 117.0L105.8 117.0L106.0 117.0L106.3 117.0L104.7 116.5L104.5 116.5L104.3 116.5L104.2 116.5L104.0 116.5L103.9 116.5L103.7 116.5ZM107.5 116.9L107.6 116.9L107.8 116.9L108.0 116.9L108.2 116.9L108.4 116.9L108.6 116.9L106.5 116.4L106.4 116.4L106.2 116.4L106.1 116.5L105.9 116.5L105.8 116.5L105.7 116.5ZM109.5 116.8L109.7 116.8L109.8 116.8L110.0 116.8L110.1 116.8L110.3 116.7L110.4 116.7L108.1 116.3L108.0 116.4L107.8 116.4L107.7 116.4L107.6 116.4L107.5 116.4L107.3 116.4ZM111.2 116.7L111.4 116.7L111.5 116.6L111.6 116.6L111.7 116.6L111.8 116.6L112.0 116.6L109.4 116.3L109.3 116.3L109.2 116.3L109.1 116.3L109.0 116.3L108.9 116.3L108.8 116.3ZM116.3 116.2L117.1 116.1L117.9 115.9L118.8 115.8L119.7 115.7L120.7 115.5L121.7 115.4L118.6 115.3L117.5 115.5L116.6 115.6L115.7 115.7L114.8 115.8L114.0 115.9L113.3 115.9ZM128.9 114.0L130.4 113.6L132.0 113.2L133.7 112.8L135.3 112.3L137.0 111.8L138.7 111.3L136.4 111.5L134.6 112.0L132.8 112.5L131.1 113.0L129.3 113.4L127.6 113.7L126.0 114.1ZM148.6 107.3L150.3 106.4L152.0 105.5L153.7 104.5L155.2 103.6L156.7 102.6L158.2 101.5L157.3 101.7L155.8 102.8L154.2 103.8L152.5 104.8L150.8 105.7L149.0 106.6L147.1 107.5ZM33.8 93.6L34.9 94.9L36.1 96.3L37.5 97.7L39.0 99.1L40.6 100.4L42.4 101.7L43.2 101.9L41.3 100.6L39.6 99.2L38.0 97.8L36.6 96.5L35.3 95.1L34.2 93.7ZM52.6 107.5L54.3 108.3L56.1 109.0L57.8 109.7L59.6 110.3L61.4 110.9L63.3 111.5L65.6 111.7L63.6 111.1L61.6 110.5L59.7 109.9L57.8 109.2L55.9 108.5L54.1 107.8ZM73.7 114.1L75.1 114.4L76.4 114.6L77.7 114.8L78.9 115.0L80.1 115.2L81.1 115.3L84.5 115.3L83.4 115.1L82.2 115.0L81.0 114.8L79.7 114.6L78.3 114.4L76.9 114.2ZM86.4 115.9L87.2 116.0L87.9 116.1L88.6 116.1L89.2 116.2L89.8 116.2L90.3 116.3L92.8 115.9L92.4 115.9L91.9 115.9L91.4 115.9L90.8 115.8L90.2 115.8L89.5 115.7ZM90.9 116.3L91.0 116.3L91.2 116.3L91.3 116.3L91.4 116.3L91.5 116.3L91.6 116.3L93.9 116.0L93.8 116.0L93.7 116.0L93.6 116.0L93.5 116.0L93.4 116.0L93.3 116.0ZM92.4 116.4L92.5 116.4L92.6 116.4L92.8 116.4L92.9 116.4L93.0 116.4L93.2 116.4L95.1 116.0L95.0 116.0L94.9 116.0L94.8 116.0L94.7 116.0L94.6 116.0L94.4 116.0ZM94.0 116.5L94.2 116.5L94.4 116.5L94.5 116.5L94.7 116.5L94.8 116.5L95.0 116.5L96.4 116.1L96.3 116.1L96.2 116.1L96.1 116.1L96.0 116.1L95.8 116.0L95.7 116.0ZM96.0 116.5L96.2 116.5L96.4 116.5L96.6 116.5L96.7 116.6L96.9 116.6L97.0 116.6L97.9 116.1L97.8 116.1L97.7 116.1L97.6 116.1L97.4 116.1L97.3 116.1L97.1 116.1ZM98.1 116.6L98.4 116.6L98.6 116.6L98.8 116.6L99.0 116.6L99.1 116.6L99.3 116.6L99.5 116.1L99.4 116.1L99.2 116.1L99.1 116.1L99.0 116.1L98.8 116.1L98.7 116.1ZM100.4 116.6L100.6 116.6L100.7 116.6L100.9 116.6L101.1 116.6L101.3 116.6L101.6 116.6L101.0 116.1L100.9 116.1L100.7 116.1L100.6 116.1L100.5 116.1L100.3 116.1L100.2 116.1ZM102.7 116.6L102.8 116.6L103.0 116.6L103.1 116.5L103.3 116.5L103.5 116.5L103.7 116.5L102.6 116.1L102.4 116.1L102.3 116.1L102.1 116.1L102.0 116.1L101.9 116.1L101.8 116.1ZM104.7 116.5L104.9 116.5L105.0 116.5L105.2 116.5L105.3 116.5L105.5 116.5L105.7 116.5L104.0 116.0L103.9 116.0L103.7 116.1L103.6 116.1L103.5 116.1L103.4 116.1L103.3 116.1ZM106.5 116.4L106.7 116.4L106.8 116.4L106.9 116.4L107.1 116.4L107.2 116.4L107.3 116.4L105.3 116.0L105.1 116.0L105.0 116.0L104.9 116.0L104.8 116.0L104.7 116.0L104.6 116.0ZM108.1 116.3L108.2 116.3L108.3 116.3L108.4 116.3L108.5 116.3L108.7 116.3L108.8 116.3L106.4 116.0L106.3 116.0L106.2 116.0L106.1 116.0L106.0 116.0L105.9 116.0L105.8 116.0ZM109.4 116.3L109.9 116.2L110.5 116.2L111.1 116.1L111.8 116.1L112.5 116.0L113.3 115.9L110.2 115.7L109.5 115.8L108.9 115.8L108.3 115.9L107.8 115.9L107.3 115.9L106.9 115.9ZM118.6 115.3L119.6 115.2L120.8 115.0L122.0 114.8L123.3 114.6L124.6 114.4L126.0 114.1L122.8 114.2L121.4 114.4L120.0 114.6L118.7 114.8L117.5 115.0L116.3 115.1L115.2 115.3ZM136.4 111.5L138.3 110.9L140.1 110.3L141.9 109.7L143.6 109.0L145.4 108.3L147.1 107.5L145.6 107.8L143.8 108.5L141.9 109.2L140.0 109.9L138.1 110.5L136.1 111.1L134.1 111.7ZM157.3 101.7L159.1 100.4L160.7 99.1L162.2 97.7L163.6 96.3L164.8 94.9L165.9 93.6L165.5 93.7L164.4 95.1L163.1 96.5L161.7 97.8L160.1 99.2L158.4 100.6L156.5 101.9ZM43.2 101.9L44.8 103.0L46.5 104.0L48.3 105.0L50.1 105.9L52.1 106.9L54.1 107.8L56.2 108.1L54.0 107.2L51.9 106.2L49.8 105.3L47.9 104.3L46.0 103.2L44.3 102.2ZM65.6 111.7L67.5 112.2L69.5 112.7L71.4 113.1L73.3 113.5L75.1 113.9L76.9 114.2L82.0 114.4L80.0 114.1L77.9 113.8L75.7 113.4L73.5 113.0L71.3 112.5L69.1 112.0ZM84.5 115.3L85.5 115.4L86.4 115.5L87.3 115.5L88.1 115.6L88.8 115.7L89.5 115.7L94.3 115.4L93.8 115.4L93.2 115.3L92.6 115.3L91.9 115.3L91.1 115.2L90.1 115.2ZM92.8 115.9L92.9 115.9L93.0 115.9L93.1 115.9L93.2 115.9L93.2 116.0L93.3 116.0L96.7 115.5L96.6 115.5L96.6 115.5L96.5 115.5L96.5 115.5L96.4 115.5L96.4 115.5ZM93.9 116.0L94.0 116.0L94.1 116.0L94.2 116.0L94.3 116.0L94.4 116.0L94.4 116.0L97.3 115.5L97.2 115.5L97.2 115.5L97.1 115.5L97.1 115.5L97.0 115.5L97.0 115.5ZM95.1 116.0L95.2 116.0L95.3 116.0L95.4 116.0L95.5 116.0L95.6 116.0L95.7 116.0L97.9 115.5L97.9 115.5L97.8 115.5L97.8 115.5L97.7 115.5L97.7 115.5L97.6 115.5ZM96.4 116.1L96.6 116.1L96.7 116.1L96.8 116.1L96.9 116.1L97.0 116.1L97.1 116.1L98.6 115.5L98.6 115.5L98.5 115.5L98.4 115.5L98.4 115.5L98.3 115.5L98.3 115.5ZM97.9 116.1L98.1 116.1L98.2 116.1L98.3 116.1L98.5 116.1L98.6 116.1L98.7 116.1L99.3 115.5L99.3 115.5L99.2 115.5L99.2 115.5L99.1 115.5L99.0 115.5L99.0 115.5ZM99.5 116.1L99.6 116.1L99.7 116.1L99.9 116.1L100.0 116.1L100.1 116.1L100.2 116.1L100.0 115.5L100.0 115.5L99.9 115.5L99.9 115.5L99.8 115.5L99.7 115.5L99.7 115.5ZM101.0 116.1L101.1 116.1L101.2 116.1L101.4 116.1L101.5 116.1L101.6 116.1L101.8 116.1L100.7 115.5L100.7 115.5L100.6 115.5L100.5 115.5L100.5 115.5L100.4 115.5L100.4 115.5ZM102.6 116.1L102.7 116.1L102.8 116.1L102.9 116.1L103.0 116.1L103.1 116.1L103.3 116.1L101.4 115.5L101.4 115.5L101.3 115.5L101.3 115.5L101.2 115.5L101.1 115.5L101.1 115.5ZM104.0 116.0L104.1 116.0L104.2 116.0L104.3 116.0L104.4 116.0L104.5 116.0L104.6 116.0L102.1 115.5L102.0 115.5L102.0 115.5L101.9 115.5L101.9 115.5L101.8 115.5L101.8 115.5ZM105.3 116.0L105.3 116.0L105.4 116.0L105.5 116.0L105.6 116.0L105.7 116.0L105.8 116.0L102.7 115.5L102.7 115.5L102.6 115.5L102.6 115.5L102.5 115.5L102.5 115.5L102.4 115.5ZM106.4 116.0L106.5 116.0L106.5 115.9L106.6 115.9L106.7 115.9L106.8 115.9L106.9 115.9L103.3 115.5L103.3 115.5L103.2 115.5L103.2 115.5L103.1 115.5L103.1 115.5L103.0 115.5ZM110.2 115.7L110.9 115.7L111.6 115.6L112.4 115.5L113.3 115.5L114.2 115.4L115.2 115.3L109.6 115.2L108.6 115.2L107.8 115.3L107.1 115.3L106.5 115.3L105.9 115.4L105.4 115.4ZM122.8 114.2L124.6 113.9L126.4 113.5L128.3 113.1L130.2 112.7L132.2 112.2L134.1 111.7L130.6 112.0L128.4 112.5L126.2 113.0L124.0 113.4L121.8 113.8L119.7 114.1L117.7 114.4ZM145.6 107.8L147.6 106.9L149.6 105.9L151.4 105.0L153.2 104.0L154.9 103.0L156.5 101.9L155.4 102.2L153.7 103.2L151.8 104.3L149.9 105.3L147.8 106.2L145.7 107.2L143.5 108.1Z" fill="#747474"/></g>
<circle cx="99.85" cy="99.50" r="77.4" fill="url(#sh)"/>
<g filter="url(#bl3)"><ellipse cx="99.85" cy="83.5" rx="75.0" ry="40.0" fill="#0a0a0a" opacity="0.95"/></g>
<g clip-path="url(#capc)"><rect x="0" y="0" width="200" height="140" fill="url(#capl)"/><g clip-path="url(#topc)"><g filter="url(#bl3)"><circle cx="99.85" cy="99.50" r="75.4" fill="none" stroke="#86a3ad" stroke-width="3.5" opacity="0.75"/></g></g><rect x="20" y="20" width="160" height="110" filter="url(#nzl)" opacity="0.27"/></g>
<rect x="20" y="20" width="160" height="160" filter="url(#nz)" opacity="0.5"/>
</g>
<g clip-path="url(#botc)"><circle cx="99.85" cy="99.50" r="76.4" fill="none" stroke="#1a1a1a" stroke-width="0.8" opacity="0.6"/></g>
</svg>
</div></div>
</body></html>
